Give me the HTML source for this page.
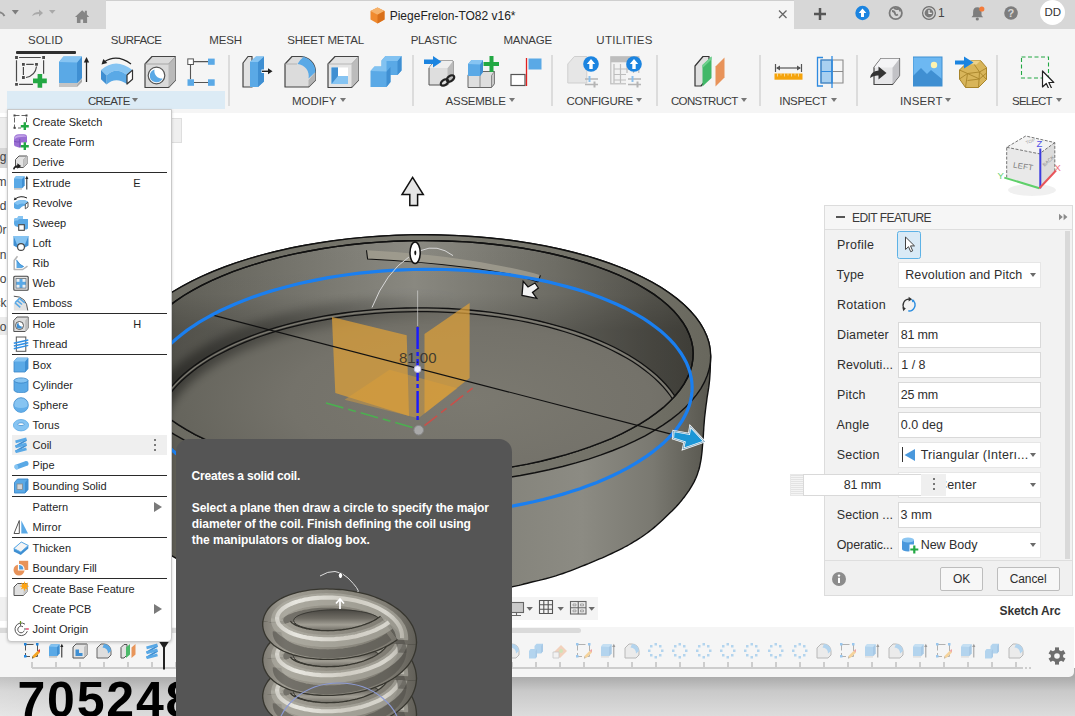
<!DOCTYPE html>
<html lang="en">
<head>
<meta charset="utf-8">
<title>PiegeFrelon-TO82 v16*</title>
<style>
html,body{margin:0;padding:0;}
body{width:1075px;height:716px;overflow:hidden;position:relative;background:#fff;font-family:"Liberation Sans",Arial,sans-serif;color:#333;}
.abs{position:absolute;}
.t{position:absolute;white-space:nowrap;line-height:1;}
#titlebar{left:0;top:0;width:1075px;height:29px;background:#d7d7d7;}
#doctab{left:106px;top:0;width:688px;height:29px;background:#f5f5f5;border-top:1px solid #cfcfcf;box-sizing:border-box;}
#toolbar{left:0;top:29px;width:1075px;height:84px;background:#f5f5f5;}
#canvas{left:0;top:113px;width:1075px;height:514px;background:#fff;}
#timeline{left:0;top:627px;width:1074px;height:50px;background:#f5f5f5;border-radius:0 0 5px 0;}
#below{left:0;top:668px;width:1075px;height:48px;background:linear-gradient(90deg,rgba(255,255,255,.28),rgba(255,255,255,0) 130px),linear-gradient(#ababab 0,#ababab 9px,#c9c9c9 23px,#dcdcdc 48px);}
.tab{font-size:11.5px;color:#3c3c3c;top:34.7px;}
.plabel{font-size:11.5px;color:#3c3c3c;top:95.7px;}
.sep{position:absolute;top:55px;width:2px;height:51px;background:#dcdcdc;}
.dd{position:absolute;width:0;height:0;border-left:3.5px solid transparent;border-right:3.5px solid transparent;border-top:4px solid #777;top:98px;}
.mi{font-size:11px;color:#1f1f1f;line-height:12px;}
.tp{font-size:12px;font-weight:bold;color:#fff;line-height:16px;}
.dl{font-size:12.5px;color:#2e2e2e;line-height:14px;}
.inp{position:absolute;left:898px;width:143px;height:26px;box-sizing:border-box;background:#fff;border:1px solid #d9d9d9;}
.dda{position:absolute;width:0;height:0;border-left:3.5px solid transparent;border-right:3.5px solid transparent;border-top:4px solid #6a6a6a;}
.btn{position:absolute;top:567px;height:24px;box-sizing:border-box;border:1px solid #bdbdbd;border-radius:2px;background:#f7f7f7;}
#tb0{left:28.1px !important;letter-spacing:0.02px}
#tb1{left:110.8px !important;letter-spacing:-0.52px}
#tb2{left:209.2px !important;letter-spacing:-0.11px}
#tb3{left:287.2px !important;letter-spacing:-0.18px}
#tb4{left:410.7px !important;letter-spacing:-0.26px}
#tb5{left:503.5px !important;letter-spacing:-0.23px}
#tb6{left:596.3px !important;letter-spacing:0.31px}
#pl0{left:87.9px !important;letter-spacing:-0.66px}
#pl1{left:292.0px !important;letter-spacing:-0.05px}
#pl2{left:445.5px !important;letter-spacing:-0.23px}
#pl3{left:566.5px !important;letter-spacing:-0.28px}
#pl4{left:670.9px !important;letter-spacing:-0.61px}
#pl5{left:779.3px !important;letter-spacing:-0.34px}
#pl6{left:900.0px !important;letter-spacing:0.11px}
#pl7{left:1012.1px !important;letter-spacing:-0.87px}
#ttl{left:389.7px !important;letter-spacing:-0.00px}
#tp0{left:191.6px !important;letter-spacing:-0.20px}
#tp1{left:191.8px !important;letter-spacing:-0.08px}
#tp2{left:191.8px !important;letter-spacing:-0.07px}
#tp3{left:191.8px !important;letter-spacing:-0.02px}
#dh{left:852.0px !important;letter-spacing:-0.55px}
#dv0{left:905.2px !important;letter-spacing:0.13px}
#dl0{left:837.0px !important;letter-spacing:0.26px}
#dl1{left:836.5px !important;letter-spacing:0.10px}
#dl2{left:837.0px !important;letter-spacing:0.29px}
#dl3{left:837.0px !important;letter-spacing:0.15px}
#dl4{left:837.0px !important;letter-spacing:0.03px}
#dl5{left:837.0px !important;letter-spacing:0.18px}
#dl6{left:836.5px !important;letter-spacing:0.18px}
#dl7{left:836.8px !important;letter-spacing:0.15px}
#dl8{left:836.8px !important;letter-spacing:0.05px}
#dl9{left:836.8px !important;letter-spacing:-0.16px}
#di0{left:900.8px !important;letter-spacing:-0.23px}
#di1{left:901.3px !important;letter-spacing:-0.03px}
#di2{left:900.8px !important;letter-spacing:-0.23px}
#di3{left:900.8px !important;letter-spacing:0.06px}
#di4{left:900.5px !important;letter-spacing:0.08px}
#dv1{left:920.7px !important;letter-spacing:0.26px}
#dv3{left:920.7px !important;letter-spacing:-0.03px}
#dv2{left:938.0px !important;letter-spacing:0.19px}
#df{left:843.8px !important;letter-spacing:-0.18px}
#db0{left:953.1px !important;letter-spacing:-0.14px}
#db1{left:1009.7px !important;letter-spacing:-0.09px}
#sa{left:999.5px !important;letter-spacing:-0.12px}
</style>
</head>
<body>
<div id="titlebar" class="abs"></div>
<div id="doctab" class="abs"></div>
<div id="toolbar" class="abs"></div>
<div id="canvas" class="abs"></div>
<div id="below" class="abs"></div>
<div id="timeline" class="abs"></div>
<svg class="abs" style="left:0;top:0" width="1075" height="716" viewBox="0 0 1075 716">
<defs>
<linearGradient id="gOuter" gradientUnits="userSpaceOnUse" x1="120" y1="0" x2="712" y2="0">
<stop offset="0" stop-color="#55544c"/><stop offset="0.35" stop-color="#74736a"/><stop offset="0.78" stop-color="#8c8b83"/><stop offset="0.9" stop-color="#7a7971"/><stop offset="1" stop-color="#56554d"/></linearGradient>
<linearGradient id="gRim" gradientUnits="userSpaceOnUse" x1="120" y1="0" x2="712" y2="0">
<stop offset="0" stop-color="#69685f"/><stop offset="0.5" stop-color="#79786e"/><stop offset="0.85" stop-color="#737268"/><stop offset="1" stop-color="#68675d"/></linearGradient>
<linearGradient id="gWall" gradientUnits="userSpaceOnUse" x1="135" y1="0" x2="694" y2="0">
<stop offset="0" stop-color="#5c5b53"/><stop offset="0.2" stop-color="#6e6d65"/><stop offset="0.5" stop-color="#8b8a82"/><stop offset="0.75" stop-color="#6f6e66"/><stop offset="0.92" stop-color="#55544d"/><stop offset="1" stop-color="#4b4a43"/></linearGradient>
<linearGradient id="gWallV" gradientUnits="userSpaceOnUse" x1="0" y1="240" x2="0" y2="330">
<stop offset="0" stop-color="#000" stop-opacity="0"/><stop offset="0.6" stop-color="#000" stop-opacity="0.02"/><stop offset="1" stop-color="#000" stop-opacity="0.17"/></linearGradient>
<radialGradient id="gFloor" gradientUnits="userSpaceOnUse" cx="470" cy="400" r="300" gradientTransform="translate(0 240) scale(1 0.4)">
<stop offset="0" stop-color="#7b7970"/><stop offset="0.6" stop-color="#74726a"/><stop offset="1" stop-color="#65645c"/></radialGradient>
<linearGradient id="gShade" gradientUnits="userSpaceOnUse" x1="170" y1="0" x2="460" y2="0"><stop offset="0" stop-color="#000" stop-opacity=".42"/><stop offset=".45" stop-color="#000" stop-opacity=".22"/><stop offset="1" stop-color="#000" stop-opacity="0"/></linearGradient>
<filter id="blur4" x="-10%" y="-30%" width="120%" height="160%"><feGaussianBlur stdDeviation="5"/></filter>
<clipPath id="cE2"><path d="M693.2 353.0 L692.9 359.2 L691.9 365.4 L690.1 371.6 L687.5 377.7 L684.1 383.8 L680.0 389.9 L675.2 395.8 L669.6 401.6 L663.3 407.4 L656.3 412.9 L648.7 418.4 L640.4 423.6 L631.4 428.7 L621.9 433.6 L611.8 438.3 L601.1 442.7 L589.9 446.9 L578.2 450.9 L566.1 454.6 L553.5 458.0 L540.6 461.2 L527.3 464.1 L513.6 466.6 L499.8 468.9 L485.6 470.9 L471.3 472.5 L456.8 473.9 L442.2 474.9 L427.5 475.6 L412.8 475.9 L398.1 476.0 L383.4 475.7 L368.8 475.1 L354.3 474.1 L340.0 472.8 L325.9 471.3 L312.1 469.3 L298.5 467.1 L285.3 464.6 L272.4 461.8 L259.9 458.7 L247.9 455.3 L236.3 451.7 L225.2 447.8 L214.6 443.6 L204.6 439.2 L195.2 434.6 L186.4 429.7 L178.2 424.7 L170.7 419.5 L163.8 414.1 L157.7 408.5 L152.3 402.9 L147.6 397.0 L143.6 391.1 L140.4 385.1 L138.0 379.0 L136.3 372.9 L135.4 366.7 L135.3 360.5 L135.9 354.3 L137.4 348.1 L139.6 341.9 L142.6 335.8 L146.3 329.7 L150.8 323.7 L156.0 317.8 L161.9 312.0 L168.5 306.4 L175.9 300.9 L183.8 295.5 L192.5 290.4 L201.7 285.4 L211.5 280.6 L221.9 276.1 L232.9 271.7 L244.3 267.6 L256.2 263.8 L268.6 260.2 L281.3 256.9 L294.5 253.9 L307.9 251.2 L321.7 248.7 L335.7 246.6 L350.0 244.8 L364.4 243.3 L378.9 242.1 L393.6 241.3 L408.3 240.8 L423.0 240.6 L437.7 240.7 L452.4 241.2 L466.9 241.9 L481.3 243.0 L495.5 244.5 L509.5 246.2 L523.2 248.3 L536.6 250.6 L549.6 253.3 L562.3 256.3 L574.6 259.5 L586.4 263.0 L597.7 266.8 L608.6 270.8 L618.9 275.1 L628.6 279.6 L637.7 284.4 L646.2 289.3 L654.1 294.4 L661.3 299.8 L667.8 305.2 L673.5 310.8 L678.6 316.6 L682.9 322.5 L686.5 328.4 L689.3 334.5 L691.4 340.6 L692.7 346.8 L693.2 353.0Z"/></clipPath>
</defs>
<path d="M120.8 364.1 L121.0 359.2 L121.6 354.2 L122.7 349.2 L124.2 344.3 L126.3 339.4 L128.7 334.5 L131.7 329.6 L135.0 324.8 L138.9 320.1 L143.1 315.4 L147.8 310.8 L152.9 306.2 L158.5 301.8 L164.4 297.4 L170.7 293.2 L177.4 289.0 L184.5 285.0 L192.0 281.1 L199.8 277.3 L208.0 273.6 L216.5 270.1 L225.3 266.7 L234.4 263.4 L243.8 260.3 L253.4 257.4 L263.4 254.6 L273.5 252.0 L283.9 249.6 L294.5 247.3 L305.3 245.3 L316.2 243.4 L327.4 241.6 L338.6 240.1 L350.0 238.8 L361.5 237.6 L373.0 236.7 L384.7 235.9 L396.4 235.3 L408.1 235.0 L419.8 234.8 L431.5 234.8 L443.2 235.1 L454.9 235.5 L466.5 236.1 L478.0 236.9 L489.4 237.9 L500.7 239.1 L511.9 240.5 L522.9 242.1 L533.7 243.9 L544.4 245.8 L554.8 248.0 L565.1 250.3 L575.1 252.7 L584.8 255.4 L594.3 258.2 L603.5 261.2 L612.4 264.3 L621.0 267.6 L629.2 271.0 L637.1 274.6 L644.7 278.3 L651.9 282.1 L658.8 286.1 L665.2 290.2 L671.3 294.4 L676.9 298.6 L682.2 303.0 L687.0 307.5 L691.4 312.1 L695.4 316.7 L698.9 321.4 L701.9 326.2 L704.5 331.0 L706.7 335.8 L708.4 340.7 L709.6 345.7 L710.7 357.0 L710.6 358.8 L710.5 361.2 L710.4 364.1 L710.3 367.2 L710.2 370.6 L710.0 373.9 L709.8 377.1 L709.6 380.0 L709.3 382.6 L709.0 385.2 L708.7 387.7 L708.3 390.2 L707.9 392.6 L707.5 395.1 L707.1 397.5 L706.8 400.0 L706.5 402.5 L706.1 405.0 L705.8 407.5 L705.5 410.0 L705.2 412.5 L704.9 415.0 L704.6 417.5 L704.4 420.0 L704.2 422.5 L704.0 424.9 L703.8 427.3 L703.7 429.8 L703.5 432.2 L703.4 434.6 L703.2 437.1 L703.0 439.5 L702.8 442.0 L702.6 444.5 L702.4 447.0 L702.2 449.5 L702.0 452.0 L701.7 454.5 L701.4 456.8 L701.1 459.1 L700.7 461.3 L700.3 463.3 L699.9 465.3 L699.5 467.3 L699.0 469.2 L698.4 471.0 L697.8 472.9 L697.2 474.7 L696.5 476.5 L695.8 478.2 L695.0 479.9 L694.2 481.6 L693.4 483.2 L692.4 484.9 L691.4 486.6 L690.3 488.4 L689.1 490.3 L687.8 492.2 L686.4 494.2 L684.9 496.2 L683.3 498.2 L681.8 500.2 L680.2 502.1 L678.6 504.0 L677.0 505.8 L675.4 507.6 L673.7 509.3 L672.0 511.0 L670.3 512.6 L668.5 514.3 L666.7 516.0 L664.9 517.7 L663.1 519.4 L661.2 521.2 L659.3 522.9 L657.3 524.7 L655.4 526.4 L653.4 528.1 L651.4 529.8 L649.3 531.4 L647.2 533.0 L645.1 534.5 L643.0 536.0 L640.8 537.5 L638.6 538.9 L636.3 540.3 L634.0 541.7 L631.7 543.1 L629.4 544.5 L627.0 545.8 L624.7 547.0 L622.3 548.3 L619.8 549.6 L617.2 550.9 L614.5 552.2 L611.7 553.5 L608.7 554.9 L605.6 556.3 L602.3 557.8 L598.9 559.2 L595.5 560.7 L592.0 562.1 L588.5 563.6 L585.0 565.0 L581.4 566.4 L577.8 567.9 L574.1 569.3 L570.3 570.8 L566.6 572.2 L562.9 573.5 L559.3 574.7 L555.8 575.9 L552.4 576.9 L548.9 577.9 L545.6 578.8 L542.2 579.6 L539.0 580.4 L535.9 581.1 L532.9 581.8 L530.0 582.5 L527.4 583.2 L525.1 583.8 L523.0 584.3 L520.9 584.9 L518.9 585.4 L516.6 585.9 L514.1 586.4 L511.2 587.0 L508.0 587.6 L504.5 588.2 L500.8 588.9 L496.9 589.5 L492.9 590.2 L488.7 590.8 L484.4 591.4 L480.0 592.0 L475.6 592.6 L471.1 593.1 L466.5 593.7 L461.8 594.2 L456.9 594.8 L451.6 595.2 L446.0 595.7 L440.0 596.0 L433.6 596.3 L426.9 596.6 L419.8 596.9 L412.5 597.2 L404.8 597.3 L396.9 597.4 L388.6 597.3 L380.0 597.0 L371.1 596.6 L361.9 596.1 L352.3 595.5 L342.5 594.8 L332.3 593.9 L321.9 592.9 L311.1 591.6 L300.0 590.0 L288.3 588.3 L275.7 586.6 L262.6 584.8 L249.4 582.7 L236.2 580.3 L223.4 577.4 L211.2 574.0 L200.0 570.0 L189.5 565.3 L179.2 560.1 L169.4 554.3 L160.0 548.1 L151.3 541.5 L143.3 534.6 L136.2 527.4 L130.0 520.0 L124.9 512.3 L120.8 504.3 L117.5 495.9 L114.9 487.2 L113.0 478.2 L111.6 469.0 L110.7 459.6 L110.0 450.0 L110.0 439.5 L110.8 427.8 L112.3 415.5 L114.2 403.1 L116.3 391.3 L118.3 380.6 L119.9 371.7 L121.0 365.0Z" fill="url(#gOuter)" stroke="#111" stroke-width="1.4" stroke-linejoin="round"/>
<path d="M710.7 355.6 L710.4 362.2 L709.3 368.8 L707.3 375.3 L704.5 381.9 L701.0 388.3 L696.6 394.7 L691.5 401.0 L685.5 407.2 L678.9 413.2 L671.5 419.1 L663.3 424.9 L654.5 430.4 L645.1 435.8 L635.0 440.9 L624.2 445.8 L612.9 450.5 L601.1 454.9 L588.7 459.1 L575.9 462.9 L562.6 466.5 L548.9 469.8 L534.8 472.8 L520.4 475.5 L505.7 477.8 L490.7 479.9 L475.6 481.6 L460.2 482.9 L444.8 483.9 L429.2 484.6 L413.7 484.9 L398.1 484.8 L382.6 484.5 L367.2 483.7 L351.9 482.7 L336.8 481.2 L321.9 479.5 L307.3 477.4 L292.9 475.0 L279.0 472.2 L265.4 469.2 L252.2 465.8 L239.5 462.2 L227.2 458.2 L215.5 454.0 L204.4 449.5 L193.8 444.8 L183.9 439.9 L174.6 434.7 L165.9 429.3 L158.0 423.7 L150.8 417.9 L144.3 412.0 L138.6 405.9 L133.7 399.7 L129.5 393.4 L126.2 387.0 L123.6 380.5 L121.9 374.0 L121.0 367.4 L120.9 360.8 L121.6 354.2 L123.1 347.6 L125.5 341.1 L128.7 334.6 L132.6 328.2 L137.4 321.8 L142.9 315.6 L149.2 309.5 L156.3 303.5 L164.0 297.7 L172.5 292.0 L181.6 286.6 L191.4 281.3 L201.8 276.3 L212.9 271.5 L224.4 267.0 L236.6 262.7 L249.2 258.7 L262.3 254.9 L275.8 251.5 L289.7 248.3 L303.9 245.5 L318.5 243.0 L333.3 240.8 L348.4 238.9 L363.6 237.4 L379.0 236.3 L394.5 235.4 L410.1 234.9 L425.6 234.8 L441.2 235.0 L456.6 235.6 L472.0 236.5 L487.2 237.7 L502.2 239.3 L517.0 241.2 L531.5 243.5 L545.6 246.1 L559.4 249.0 L572.8 252.2 L585.8 255.7 L598.2 259.5 L610.2 263.5 L621.7 267.9 L632.5 272.5 L642.8 277.3 L652.4 282.4 L661.4 287.7 L669.6 293.2 L677.2 298.9 L684.1 304.7 L690.1 310.7 L695.5 316.9 L700.0 323.1 L703.8 329.5 L706.7 335.9 L708.9 342.4 L710.2 349.0 L710.7 355.6Z" fill="url(#gRim)" stroke="#111" stroke-width="1.4"/>
<path d="M693.2 353.0 L692.9 359.2 L691.9 365.4 L690.1 371.6 L687.5 377.7 L684.1 383.8 L680.0 389.9 L675.2 395.8 L669.6 401.6 L663.3 407.4 L656.3 412.9 L648.7 418.4 L640.4 423.6 L631.4 428.7 L621.9 433.6 L611.8 438.3 L601.1 442.7 L589.9 446.9 L578.2 450.9 L566.1 454.6 L553.5 458.0 L540.6 461.2 L527.3 464.1 L513.6 466.6 L499.8 468.9 L485.6 470.9 L471.3 472.5 L456.8 473.9 L442.2 474.9 L427.5 475.6 L412.8 475.9 L398.1 476.0 L383.4 475.7 L368.8 475.1 L354.3 474.1 L340.0 472.8 L325.9 471.3 L312.1 469.3 L298.5 467.1 L285.3 464.6 L272.4 461.8 L259.9 458.7 L247.9 455.3 L236.3 451.7 L225.2 447.8 L214.6 443.6 L204.6 439.2 L195.2 434.6 L186.4 429.7 L178.2 424.7 L170.7 419.5 L163.8 414.1 L157.7 408.5 L152.3 402.9 L147.6 397.0 L143.6 391.1 L140.4 385.1 L138.0 379.0 L136.3 372.9 L135.4 366.7 L135.3 360.5 L135.9 354.3 L137.4 348.1 L139.6 341.9 L142.6 335.8 L146.3 329.7 L150.8 323.7 L156.0 317.8 L161.9 312.0 L168.5 306.4 L175.9 300.9 L183.8 295.5 L192.5 290.4 L201.7 285.4 L211.5 280.6 L221.9 276.1 L232.9 271.7 L244.3 267.6 L256.2 263.8 L268.6 260.2 L281.3 256.9 L294.5 253.9 L307.9 251.2 L321.7 248.7 L335.7 246.6 L350.0 244.8 L364.4 243.3 L378.9 242.1 L393.6 241.3 L408.3 240.8 L423.0 240.6 L437.7 240.7 L452.4 241.2 L466.9 241.9 L481.3 243.0 L495.5 244.5 L509.5 246.2 L523.2 248.3 L536.6 250.6 L549.6 253.3 L562.3 256.3 L574.6 259.5 L586.4 263.0 L597.7 266.8 L608.6 270.8 L618.9 275.1 L628.6 279.6 L637.7 284.4 L646.2 289.3 L654.1 294.4 L661.3 299.8 L667.8 305.2 L673.5 310.8 L678.6 316.6 L682.9 322.5 L686.5 328.4 L689.3 334.5 L691.4 340.6 L692.7 346.8 L693.2 353.0Z" fill="url(#gWall)" stroke="#111" stroke-width="1.4"/>
<g clip-path="url(#cE2)">
<path d="M693.2 353.0 L692.9 359.2 L691.9 365.4 L690.1 371.6 L687.5 377.7 L684.1 383.8 L680.0 389.9 L675.2 395.8 L669.6 401.6 L663.3 407.4 L656.3 412.9 L648.7 418.4 L640.4 423.6 L631.4 428.7 L621.9 433.6 L611.8 438.3 L601.1 442.7 L589.9 446.9 L578.2 450.9 L566.1 454.6 L553.5 458.0 L540.6 461.2 L527.3 464.1 L513.6 466.6 L499.8 468.9 L485.6 470.9 L471.3 472.5 L456.8 473.9 L442.2 474.9 L427.5 475.6 L412.8 475.9 L398.1 476.0 L383.4 475.7 L368.8 475.1 L354.3 474.1 L340.0 472.8 L325.9 471.3 L312.1 469.3 L298.5 467.1 L285.3 464.6 L272.4 461.8 L259.9 458.7 L247.9 455.3 L236.3 451.7 L225.2 447.8 L214.6 443.6 L204.6 439.2 L195.2 434.6 L186.4 429.7 L178.2 424.7 L170.7 419.5 L163.8 414.1 L157.7 408.5 L152.3 402.9 L147.6 397.0 L143.6 391.1 L140.4 385.1 L138.0 379.0 L136.3 372.9 L135.4 366.7 L135.3 360.5 L135.9 354.3 L137.4 348.1 L139.6 341.9 L142.6 335.8 L146.3 329.7 L150.8 323.7 L156.0 317.8 L161.9 312.0 L168.5 306.4 L175.9 300.9 L183.8 295.5 L192.5 290.4 L201.7 285.4 L211.5 280.6 L221.9 276.1 L232.9 271.7 L244.3 267.6 L256.2 263.8 L268.6 260.2 L281.3 256.9 L294.5 253.9 L307.9 251.2 L321.7 248.7 L335.7 246.6 L350.0 244.8 L364.4 243.3 L378.9 242.1 L393.6 241.3 L408.3 240.8 L423.0 240.6 L437.7 240.7 L452.4 241.2 L466.9 241.9 L481.3 243.0 L495.5 244.5 L509.5 246.2 L523.2 248.3 L536.6 250.6 L549.6 253.3 L562.3 256.3 L574.6 259.5 L586.4 263.0 L597.7 266.8 L608.6 270.8 L618.9 275.1 L628.6 279.6 L637.7 284.4 L646.2 289.3 L654.1 294.4 L661.3 299.8 L667.8 305.2 L673.5 310.8 L678.6 316.6 L682.9 322.5 L686.5 328.4 L689.3 334.5 L691.4 340.6 L692.7 346.8 L693.2 353.0Z" fill="url(#gWallV)"/>
<path d="M686.8 433.2 L686.6 438.1 L685.9 443.1 L684.9 448.0 L683.5 452.9 L681.6 457.8 L679.3 462.7 L676.6 467.5 L673.6 472.2 L670.1 476.9 L666.2 481.5 L662.0 486.1 L657.3 490.6 L652.3 494.9 L646.9 499.2 L641.2 503.4 L635.1 507.5 L628.7 511.4 L622.0 515.2 L615.0 518.9 L607.6 522.5 L599.9 525.9 L592.0 529.2 L583.8 532.4 L575.3 535.3 L566.6 538.2 L557.7 540.8 L548.6 543.3 L539.2 545.6 L529.7 547.8 L520.0 549.7 L510.1 551.5 L500.1 553.1 L489.9 554.5 L479.7 555.8 L469.4 556.8 L458.9 557.6 L448.5 558.3 L437.9 558.7 L427.4 559.0 L416.8 559.1 L406.2 558.9 L395.7 558.6 L385.2 558.1 L374.7 557.3 L364.4 556.4 L354.1 555.3 L343.9 554.0 L333.8 552.5 L323.8 550.9 L314.0 549.0 L304.4 547.0 L295.0 544.8 L285.7 542.4 L276.7 539.8 L267.8 537.1 L259.2 534.2 L250.9 531.2 L242.8 528.0 L235.0 524.6 L227.5 521.1 L220.3 517.5 L213.4 513.8 L206.8 509.9 L200.6 505.9 L194.7 501.8 L189.1 497.6 L183.9 493.2 L179.1 488.8 L174.6 484.3 L170.5 479.8 L166.9 475.1 L163.6 470.4 L160.7 465.6 L158.2 460.8 L156.1 455.9 L154.4 451.0 L153.2 446.1 L152.3 441.2 L151.9 436.2 L151.9 431.2 L152.3 426.3 L153.2 421.3 L154.4 416.4 L156.1 411.5 L158.1 406.6 L160.6 401.8 L163.5 397.0 L166.8 392.3 L170.4 387.6 L174.5 383.1 L179.0 378.5 L183.8 374.1 L189.0 369.8 L194.5 365.6 L200.4 361.4 L206.7 357.4 L213.2 353.5 L220.1 349.8 L227.3 346.1 L234.8 342.6 L242.6 339.3 L250.7 336.1 L259.0 333.0 L267.6 330.1 L276.4 327.4 L285.5 324.8 L294.7 322.4 L304.2 320.2 L313.8 318.1 L323.6 316.2 L333.5 314.5 L343.6 313.0 L353.8 311.7 L364.1 310.6 L374.5 309.6 L384.9 308.9 L395.4 308.3 L406.0 308.0 L416.5 307.8 L427.1 307.9 L437.7 308.1 L448.2 308.5 L458.7 309.2 L469.1 310.0 L479.4 311.0 L489.7 312.2 L499.8 313.6 L509.8 315.2 L519.7 316.9 L529.4 318.9 L539.0 321.0 L548.3 323.3 L557.5 325.8 L566.4 328.4 L575.1 331.2 L583.6 334.2 L591.8 337.3 L599.7 340.6 L607.4 344.0 L614.8 347.5 L621.8 351.2 L628.6 355.0 L635.0 359.0 L641.1 363.0 L646.8 367.2 L652.2 371.5 L657.2 375.8 L661.8 380.3 L666.1 384.8 L670.0 389.4 L673.5 394.1 L676.6 398.9 L679.3 403.7 L681.5 408.5 L683.4 413.4 L684.9 418.3 L685.9 423.2 L686.6 428.2 L686.8 433.2Z" fill="url(#gFloor)"/>
<path d="M156.0 455.5 L154.7 451.9 L153.7 448.2 L152.9 444.6 L152.3 440.9 L152.0 437.2 L151.9 433.5 L152.0 429.9 L152.3 426.2 L152.9 422.5 L153.7 418.8 L154.8 415.2 L156.0 411.5 L157.5 407.9 L159.3 404.3 L161.2 400.8 L163.4 397.2 L165.8 393.7 L168.4 390.2 L171.2 386.8 L174.2 383.4 L177.5 380.0 L180.9 376.7 L184.6 373.4 L188.4 370.2 L192.5 367.1 L196.7 364.0 L201.2 360.9 L205.8 358.0 L210.6 355.0 L215.6 352.2 L220.8 349.4 L226.1 346.7 L231.6 344.1 L237.3 341.5 L243.1 339.1 L249.1 336.7 L255.2 334.4 L261.5 332.2 L267.9 330.0 L274.4 328.0 L281.1 326.0 L287.9 324.1 L294.8 322.4 L301.7 320.7 L308.8 319.1 L316.0 317.6 L323.3 316.3 L330.7 315.0 L338.1 313.8 L345.6 312.7 L353.2 311.8 L360.8 310.9 L368.5 310.1 L376.2 309.5 L384.0 308.9 L391.8 308.5 L399.6 308.2 L407.4 308.0 L415.3 307.8 L423.1 307.8 L431.0 307.9 L438.8 308.1 L446.6 308.5 L454.4 308.9 L462.2 309.4 L469.9 310.0 L477.6 310.8 L485.2 311.6 L492.8 312.6 L500.3 313.6 L507.7 314.8 L515.1 316.1 L522.4 317.4 L529.6 318.9 L536.7 320.5 L543.7 322.1 L550.5 323.9 L557.3 325.7 L564.0 327.7 L570.5 329.7 L576.9 331.8 L583.2 334.0 L589.3 336.3 L595.3 338.7 L601.1 341.2 L606.8 343.7 L612.3 346.3 L617.7 349.0 L622.8 351.8 L627.8 354.6 L632.7 357.5 L637.3 360.5 L641.8 363.5 L646.0 366.6 L650.1 369.8 L653.9 373.0 L657.6 376.2 L661.1 379.5 L664.3 382.9 L667.4 386.3 L670.2 389.7 L672.8 393.2 L675.2 396.7 L677.4 400.2 L679.3 403.8 L681.0 407.4 L682.5 411.0 L683.8 414.6 L684.9 418.3 L685.7 421.9 L686.3 425.6 L686.6 429.3 L686.8 433.0 L686.7 436.7 L686.3 440.3 L685.8 444.0 L685.0 447.7 L684.0 451.3 L682.7 455.0" fill="none" stroke="url(#gShade)" stroke-width="22" filter="url(#blur4)"/>
<path d="M686.8 433.2 L686.6 438.1 L685.9 443.1 L684.9 448.0 L683.5 452.9 L681.6 457.8 L679.3 462.7 L676.6 467.5 L673.6 472.2 L670.1 476.9 L666.2 481.5 L662.0 486.1 L657.3 490.6 L652.3 494.9 L646.9 499.2 L641.2 503.4 L635.1 507.5 L628.7 511.4 L622.0 515.2 L615.0 518.9 L607.6 522.5 L599.9 525.9 L592.0 529.2 L583.8 532.4 L575.3 535.3 L566.6 538.2 L557.7 540.8 L548.6 543.3 L539.2 545.6 L529.7 547.8 L520.0 549.7 L510.1 551.5 L500.1 553.1 L489.9 554.5 L479.7 555.8 L469.4 556.8 L458.9 557.6 L448.5 558.3 L437.9 558.7 L427.4 559.0 L416.8 559.1 L406.2 558.9 L395.7 558.6 L385.2 558.1 L374.7 557.3 L364.4 556.4 L354.1 555.3 L343.9 554.0 L333.8 552.5 L323.8 550.9 L314.0 549.0 L304.4 547.0 L295.0 544.8 L285.7 542.4 L276.7 539.8 L267.8 537.1 L259.2 534.2 L250.9 531.2 L242.8 528.0 L235.0 524.6 L227.5 521.1 L220.3 517.5 L213.4 513.8 L206.8 509.9 L200.6 505.9 L194.7 501.8 L189.1 497.6 L183.9 493.2 L179.1 488.8 L174.6 484.3 L170.5 479.8 L166.9 475.1 L163.6 470.4 L160.7 465.6 L158.2 460.8 L156.1 455.9 L154.4 451.0 L153.2 446.1 L152.3 441.2 L151.9 436.2 L151.9 431.2 L152.3 426.3 L153.2 421.3 L154.4 416.4 L156.1 411.5 L158.1 406.6 L160.6 401.8 L163.5 397.0 L166.8 392.3 L170.4 387.6 L174.5 383.1 L179.0 378.5 L183.8 374.1 L189.0 369.8 L194.5 365.6 L200.4 361.4 L206.7 357.4 L213.2 353.5 L220.1 349.8 L227.3 346.1 L234.8 342.6 L242.6 339.3 L250.7 336.1 L259.0 333.0 L267.6 330.1 L276.4 327.4 L285.5 324.8 L294.7 322.4 L304.2 320.2 L313.8 318.1 L323.6 316.2 L333.5 314.5 L343.6 313.0 L353.8 311.7 L364.1 310.6 L374.5 309.6 L384.9 308.9 L395.4 308.3 L406.0 308.0 L416.5 307.8 L427.1 307.9 L437.7 308.1 L448.2 308.5 L458.7 309.2 L469.1 310.0 L479.4 311.0 L489.7 312.2 L499.8 313.6 L509.8 315.2 L519.7 316.9 L529.4 318.9 L539.0 321.0 L548.3 323.3 L557.5 325.8 L566.4 328.4 L575.1 331.2 L583.6 334.2 L591.8 337.3 L599.7 340.6 L607.4 344.0 L614.8 347.5 L621.8 351.2 L628.6 355.0 L635.0 359.0 L641.1 363.0 L646.8 367.2 L652.2 371.5 L657.2 375.8 L661.8 380.3 L666.1 384.8 L670.0 389.4 L673.5 394.1 L676.6 398.9 L679.3 403.7 L681.5 408.5 L683.4 413.4 L684.9 418.3 L685.9 423.2 L686.6 428.2 L686.8 433.2Z" fill="none" stroke="#111" stroke-width="1.3"/>
<path d="M685.3 433.7 L685.1 438.6 L684.5 443.5 L683.4 448.4 L682.0 453.3 L680.2 458.1 L677.9 462.9 L675.2 467.7 L672.2 472.4 L668.7 477.1 L664.8 481.6 L660.6 486.1 L656.0 490.6 L651.0 494.9 L645.7 499.1 L640.0 503.3 L634.0 507.3 L627.6 511.2 L620.9 515.0 L613.9 518.7 L606.6 522.2 L598.9 525.6 L591.1 528.9 L582.9 532.0 L574.5 534.9 L565.8 537.7 L556.9 540.3 L547.8 542.8 L538.5 545.1 L529.0 547.2 L519.4 549.2 L509.6 550.9 L499.6 552.5 L489.5 553.9 L479.3 555.1 L469.1 556.2 L458.7 557.0 L448.3 557.6 L437.8 558.1 L427.3 558.3 L416.8 558.4 L406.3 558.3 L395.8 557.9 L385.4 557.4 L375.0 556.7 L364.6 555.8 L354.4 554.7 L344.3 553.4 L334.2 551.9 L324.3 550.3 L314.6 548.4 L305.0 546.4 L295.6 544.2 L286.4 541.9 L277.4 539.3 L268.6 536.6 L260.1 533.8 L251.8 530.8 L243.8 527.6 L236.0 524.3 L228.5 520.9 L221.4 517.3 L214.5 513.5 L207.9 509.7 L201.7 505.7 L195.9 501.7 L190.3 497.5 L185.2 493.2 L180.4 488.9 L175.9 484.4 L171.9 479.9 L168.2 475.3 L164.9 470.6 L162.1 465.9 L159.6 461.1 L157.5 456.3 L155.9 451.4 L154.6 446.5 L153.8 441.6 L153.4 436.7 L153.3 431.8 L153.8 426.9 L154.6 422.0 L155.8 417.1 L157.5 412.3 L159.5 407.4 L162.0 402.7 L164.9 397.9 L168.1 393.3 L171.8 388.6 L175.8 384.1 L180.2 379.6 L185.0 375.3 L190.2 371.0 L195.7 366.8 L201.6 362.7 L207.8 358.7 L214.3 354.9 L221.2 351.2 L228.4 347.5 L235.8 344.1 L243.6 340.8 L251.6 337.6 L259.9 334.5 L268.4 331.7 L277.2 329.0 L286.2 326.4 L295.4 324.0 L304.8 321.8 L314.4 319.8 L324.1 317.9 L334.0 316.2 L344.0 314.7 L354.1 313.4 L364.4 312.3 L374.7 311.4 L385.1 310.7 L395.6 310.1 L406.0 309.8 L416.5 309.6 L427.1 309.6 L437.6 309.9 L448.0 310.3 L458.4 310.9 L468.8 311.7 L479.1 312.7 L489.3 313.9 L499.4 315.3 L509.3 316.9 L519.1 318.6 L528.8 320.5 L538.3 322.6 L547.6 324.9 L556.7 327.4 L565.6 330.0 L574.3 332.8 L582.7 335.7 L590.9 338.8 L598.7 342.0 L606.4 345.4 L613.7 348.9 L620.7 352.6 L627.4 356.4 L633.8 360.3 L639.8 364.3 L645.6 368.4 L650.9 372.6 L655.9 376.9 L660.5 381.4 L664.7 385.9 L668.6 390.4 L672.1 395.1 L675.2 399.8 L677.8 404.5 L680.1 409.3 L682.0 414.1 L683.4 419.0 L684.5 423.9 L685.1 428.8 L685.3 433.7Z" fill="none" stroke="#807e75" stroke-width="1.1"/>
<path d="M683.6 434.2 L683.4 439.1 L682.8 443.9 L681.8 448.8 L680.3 453.6 L678.5 458.4 L676.2 463.1 L673.6 467.8 L670.5 472.4 L667.1 477.0 L663.3 481.6 L659.1 486.0 L654.5 490.4 L649.5 494.7 L644.2 498.8 L638.6 502.9 L632.6 506.9 L626.3 510.8 L619.6 514.5 L612.6 518.1 L605.4 521.6 L597.8 525.0 L590.0 528.2 L581.8 531.3 L573.5 534.2 L564.9 537.0 L556.1 539.6 L547.0 542.0 L537.8 544.3 L528.3 546.4 L518.8 548.3 L509.0 550.0 L499.1 551.6 L489.1 553.0 L479.0 554.2 L468.7 555.2 L458.5 556.0 L448.1 556.6 L437.7 557.1 L427.3 557.3 L416.8 557.4 L406.4 557.3 L396.0 556.9 L385.6 556.4 L375.2 555.7 L365.0 554.8 L354.8 553.7 L344.7 552.5 L334.8 551.0 L324.9 549.4 L315.3 547.6 L305.8 545.6 L296.4 543.4 L287.3 541.1 L278.3 538.6 L269.6 535.9 L261.1 533.1 L252.9 530.1 L244.9 527.0 L237.2 523.7 L229.8 520.3 L222.6 516.8 L215.8 513.1 L209.3 509.3 L203.1 505.4 L197.3 501.4 L191.8 497.2 L186.7 493.0 L181.9 488.7 L177.5 484.3 L173.5 479.8 L169.8 475.3 L166.6 470.7 L163.7 466.0 L161.2 461.3 L159.2 456.5 L157.5 451.7 L156.3 446.9 L155.5 442.1 L155.1 437.2 L155.0 432.3 L155.5 427.5 L156.3 422.7 L157.5 417.8 L159.1 413.0 L161.2 408.3 L163.6 403.5 L166.5 398.9 L169.7 394.3 L173.4 389.7 L177.4 385.2 L181.8 380.8 L186.5 376.5 L191.7 372.2 L197.1 368.1 L203.0 364.1 L209.1 360.1 L215.6 356.3 L222.5 352.7 L229.6 349.1 L237.0 345.7 L244.7 342.4 L252.7 339.2 L260.9 336.2 L269.4 333.4 L278.1 330.7 L287.0 328.2 L296.2 325.8 L305.5 323.7 L315.0 321.7 L324.7 319.8 L334.5 318.2 L344.5 316.7 L354.6 315.4 L364.7 314.3 L375.0 313.4 L385.3 312.6 L395.7 312.1 L406.1 311.8 L416.6 311.6 L427.0 311.6 L437.4 311.9 L447.8 312.3 L458.2 312.9 L468.5 313.7 L478.7 314.7 L488.8 315.9 L498.9 317.2 L508.8 318.8 L518.5 320.5 L528.1 322.4 L537.5 324.5 L546.8 326.7 L555.8 329.2 L564.7 331.7 L573.3 334.5 L581.6 337.4 L589.8 340.4 L597.6 343.6 L605.2 347.0 L612.4 350.5 L619.4 354.1 L626.1 357.8 L632.4 361.6 L638.4 365.6 L644.1 369.7 L649.4 373.9 L654.4 378.1 L659.0 382.5 L663.2 386.9 L667.0 391.4 L670.5 396.0 L673.5 400.7 L676.2 405.4 L678.4 410.1 L680.3 414.9 L681.7 419.7 L682.8 424.5 L683.4 429.4 L683.6 434.2Z" fill="none" stroke="#111" stroke-width="1.2"/>
</g>
<path d="M693.2 353.0 L692.9 359.2 L691.9 365.4 L690.1 371.6 L687.5 377.7 L684.1 383.8 L680.0 389.9 L675.2 395.8 L669.6 401.6 L663.3 407.4 L656.3 412.9 L648.7 418.4 L640.4 423.6 L631.4 428.7 L621.9 433.6 L611.8 438.3 L601.1 442.7 L589.9 446.9 L578.2 450.9 L566.1 454.6 L553.5 458.0 L540.6 461.2 L527.3 464.1 L513.6 466.6 L499.8 468.9 L485.6 470.9 L471.3 472.5 L456.8 473.9 L442.2 474.9 L427.5 475.6 L412.8 475.9 L398.1 476.0 L383.4 475.7 L368.8 475.1 L354.3 474.1 L340.0 472.8 L325.9 471.3 L312.1 469.3 L298.5 467.1 L285.3 464.6 L272.4 461.8 L259.9 458.7 L247.9 455.3 L236.3 451.7 L225.2 447.8 L214.6 443.6 L204.6 439.2 L195.2 434.6 L186.4 429.7 L178.2 424.7 L170.7 419.5 L163.8 414.1 L157.7 408.5 L152.3 402.9 L147.6 397.0 L143.6 391.1 L140.4 385.1 L138.0 379.0 L136.3 372.9 L135.4 366.7 L135.3 360.5 L135.9 354.3 L137.4 348.1 L139.6 341.9 L142.6 335.8 L146.3 329.7 L150.8 323.7 L156.0 317.8 L161.9 312.0 L168.5 306.4 L175.9 300.9 L183.8 295.5 L192.5 290.4 L201.7 285.4 L211.5 280.6 L221.9 276.1 L232.9 271.7 L244.3 267.6 L256.2 263.8 L268.6 260.2 L281.3 256.9 L294.5 253.9 L307.9 251.2 L321.7 248.7 L335.7 246.6 L350.0 244.8 L364.4 243.3 L378.9 242.1 L393.6 241.3 L408.3 240.8 L423.0 240.6 L437.7 240.7 L452.4 241.2 L466.9 241.9 L481.3 243.0 L495.5 244.5 L509.5 246.2 L523.2 248.3 L536.6 250.6 L549.6 253.3 L562.3 256.3 L574.6 259.5 L586.4 263.0 L597.7 266.8 L608.6 270.8 L618.9 275.1 L628.6 279.6 L637.7 284.4 L646.2 289.3 L654.1 294.4 L661.3 299.8 L667.8 305.2 L673.5 310.8 L678.6 316.6 L682.9 322.5 L686.5 328.4 L689.3 334.5 L691.4 340.6 L692.7 346.8 L693.2 353.0Z" fill="none" stroke="#111" stroke-width="1.4"/>
<polygon points="389.5,369.8 457.4,388.3 418.3,418.2 344.6,399.8" fill="#dda038" fill-opacity="0.45"/>
<polygon points="331.9,316.9 406.7,335.3 409,415.9 335.3,392.9" fill="#dc9f38" fill-opacity="0.74"/>
<polygon points="424.5,334 469.6,303 469.6,378 424.5,413.6" fill="#dc9f38" fill-opacity="0.74"/>
<line x1="326" y1="403" x2="412.5" y2="427.4" stroke="#4caf50" stroke-width="1.6" stroke-dasharray="18 5 8 5"/>
<line x1="424.5" y1="425.6" x2="475.9" y2="385.5" stroke="#c8504a" stroke-width="1.6" stroke-dasharray="16 5 7 5"/>
<line x1="212.9" y1="315.1" x2="673" y2="434.6" stroke="#111" stroke-width="1.2"/>
<line x1="417.6" y1="290.5" x2="417.6" y2="326" stroke="#e0e0e0" stroke-width="1.1" stroke-opacity=".55"/>
<line x1="417.6" y1="327" x2="417.6" y2="423" stroke="#1a1aff" stroke-width="2.4" stroke-dasharray="22 3 4 3"/>
<path d="M366.500 250.300 Q420 252.500 470 260.500 T540.400 275.200 L538 282 Q500 272 468 267.500 T367.600 259z" fill="#a39f91" fill-opacity=".8"/>
<path d="M366.500 250.300L367.600 259 Q420 261.500 468 267.500 T538 282" fill="none" stroke="#111" stroke-width="1.100"/>
<path d="M540.400 275.200L538 282" stroke="#111" stroke-width="1.100"/>
<path d="M692.1 386.5 L692.0 391.4 L691.4 396.3 L690.5 401.1 L689.1 405.9 L687.3 410.8 L685.0 415.6 L682.4 420.3 L679.3 425.0 L675.9 429.7 L672.0 434.3 L667.7 438.8 L663.1 443.3 L658.0 447.6 L652.6 451.9 L646.8 456.1 L640.7 460.2 L634.2 464.2 L627.4 468.1 L620.2 471.9 L612.8 475.5 L605.0 479.0 L596.9 482.4 L588.6 485.6 L580.0 488.7 L571.2 491.6 L562.1 494.4 L552.7 497.0 L543.2 499.5 L533.5 501.8 L523.6 503.9 L513.5 505.9 L503.3 507.6 L493.0 509.2 L482.5 510.6 L471.9 511.8 L461.3 512.9 L450.6 513.7 L439.8 514.4 L429.0 514.8 L418.2 515.1 L407.4 515.2 L396.6 515.1 L385.8 514.8 L375.1 514.3 L364.4 513.6 L353.9 512.7 L343.4 511.7 L333.1 510.4 L322.9 509.0 L312.8 507.4 L302.9 505.6 L293.2 503.6 L283.7 501.4 L274.4 499.1 L265.3 496.6 L256.4 494.0 L247.8 491.2 L239.5 488.2 L231.4 485.1 L223.7 481.9 L216.2 478.5 L209.1 474.9 L202.3 471.3 L195.8 467.5 L189.7 463.6 L183.9 459.6 L178.5 455.5 L173.5 451.3 L168.8 446.9 L164.6 442.6 L160.7 438.1 L157.3 433.5 L154.2 428.9 L151.6 424.3 L149.3 419.6 L147.5 414.8 L146.2 410.0 L145.2 405.2 L144.7 400.3 L144.6 395.5 L144.9 390.6 L145.7 385.8 L146.8 380.9 L148.4 376.1 L150.5 371.3 L152.9 366.5 L155.8 361.8 L159.0 357.1 L162.7 352.5 L166.8 347.9 L171.2 343.4 L176.1 339.0 L181.3 334.7 L186.9 330.4 L192.9 326.3 L199.2 322.2 L205.8 318.3 L212.8 314.5 L220.1 310.8 L227.8 307.2 L235.7 303.7 L243.9 300.4 L252.3 297.3 L261.1 294.3 L270.0 291.4 L279.3 288.7 L288.7 286.2 L298.3 283.8 L308.1 281.6 L318.1 279.6 L328.2 277.7 L338.5 276.0 L348.9 274.5 L359.5 273.2 L370.1 272.1 L380.7 271.1 L391.5 270.4 L402.3 269.8 L413.1 269.5 L423.9 269.3 L434.7 269.3 L445.5 269.5 L456.2 269.9 L466.9 270.5 L477.5 271.3 L488.0 272.3 L498.4 273.4 L508.7 274.7 L518.9 276.3 L528.8 278.0 L538.7 279.9 L548.3 281.9 L557.7 284.2 L566.9 286.6 L575.9 289.1 L584.6 291.8 L593.1 294.7 L601.2 297.8 L609.1 301.0 L616.8 304.3 L624.1 307.7 L631.0 311.3 L637.7 315.1 L644.0 318.9 L649.9 322.9 L655.5 326.9 L660.7 331.1 L665.6 335.3 L670.0 339.7 L674.1 344.1 L677.7 348.6 L681.0 353.2 L683.8 357.9 L686.3 362.5 L688.3 367.3 L689.9 372.1 L691.0 376.9 L691.8 381.7 L692.1 386.5Z" fill="none" stroke="#1a7ff0" stroke-width="3.2"/>
<path d="M372 307.500 Q386 272 409 257" fill="none" stroke="#d8d8d8" stroke-width="1"/>
<path d="M421 250.500 Q437 243.500 453 255.600" fill="none" stroke="#d8d8d8" stroke-width="1"/>
<ellipse cx="415.100" cy="252.800" rx="5.100" ry="10.800" fill="#fff" stroke="#111" stroke-width="1.500"/><ellipse cx="415.300" cy="252.800" rx="1" ry="2.400" fill="#111"/>
<path d="M412.600 177.300L423.300 194.500H417.600V205.600H409.800V194.500H402L412.600 177.300z" fill="#e6e6e6" stroke="#111" stroke-width="1.500" stroke-linejoin="miter"/>
<path d="M522 295.500L523.200 281.300L528 287L535 283L538.400 288L532.500 292.500L536.700 298.400z" fill="#f2f2f2" stroke="#111" stroke-width="1.300" stroke-linejoin="miter"/>
<path d="M673.500 431L689 433.800L690.200 426.300L704.500 441.500L683 449L684.500 442.200L673 438.500z" fill="#1b96d6" stroke="#fff" stroke-width="2.200" stroke-linejoin="miter"/>
<path d="M673.500 431L689 433.800L690.200 426.300L704.500 441.500L683 449L684.500 442.200L673 438.500z" fill="none" stroke="#1b5f8a" stroke-width=".5" transform="translate(0 0)"/>
<text x="399" y="363.200" font-family="Liberation Sans, Arial, sans-serif" font-size="14" fill="#2a2a2a" fill-opacity=".85" textLength="37.500" lengthAdjust="spacingAndGlyphs">81.00</text>
<circle cx="417.600" cy="369.100" r="3.400" fill="#eef" stroke="#b8b8d8" stroke-width="1"/>
<circle cx="418.700" cy="430.200" r="4.800" fill="#a9a9a9" stroke="#888" stroke-width="1"/>
<ellipse cx="1032" cy="190" rx="24" ry="6" fill="#000" fill-opacity=".06"/>
<polygon points="1006.700,147.300 1025.700,136 1054.800,142.600 1039.400,153.800" fill="#f3f3f3"/>
<polygon points="1006.700,147.300 1039.400,153.800 1039.400,188.300 1006.700,177.600" fill="#e9e9e9"/>
<polygon points="1039.400,153.800 1054.800,142.600 1054.800,171 1039.400,188.300" fill="#dcdcdc"/>
<path d="M1006.700 177.600V147.300L1025.700 136L1054.800 142.600V171M1006.700 147.300L1039.400 153.800L1054.800 142.600" fill="none" stroke="#666" stroke-width=".9" stroke-dasharray="3 1.500"/>
<path d="M1040.300 188.300V148.500" stroke="#3b3be0" stroke-width="2"/>
<path d="M1039.400 188.300L1004.300 177.600" stroke="#5fd06a" stroke-width="2"/>
<path d="M1039.400 188.300L1056 170.500" stroke="#e8555a" stroke-width="2"/>
<text x="1036.500" y="146.500" font-family="Liberation Sans, Arial, sans-serif" font-size="9.500" fill="#5050e8">Z</text>
<text x="997.500" y="179" font-family="Liberation Sans, Arial, sans-serif" font-size="9.500" fill="#66d070">Y</text>
<text x="1054.500" y="171" font-family="Liberation Sans, Arial, sans-serif" font-size="9.500" fill="#f07078">X</text>
<text x="1013" y="169" font-family="Liberation Sans, Arial, sans-serif" font-size="8" fill="#7c7c7c" transform="rotate(9 1023 166)" letter-spacing=".2">LEFT</text>
<text x="1042" y="164" font-family="Liberation Sans, Arial, sans-serif" font-size="5" fill="#8a8a8a" transform="rotate(-42 1047 162)">BACK</text>
<text x="1026" y="143" font-family="Liberation Sans, Arial, sans-serif" font-size="4.500" fill="#999" transform="rotate(-20 1030 142)">TOP</text>
</svg>
<svg class="abs" style="left:0;top:0" width="106" height="29" viewBox="0 0 106 29">
<path d="M-3 14.500q4-4.500 7.500 1.500" fill="none" stroke="#858585" stroke-width="2"/>
<path d="M11.800 10h7l-3.500 4.500z" fill="#7d7d7d"/>
<path d="M32 16q1.500-4 7-4v-2.500l4 3.500-4 3.500v-2.500q-4 0-7 2z" fill="#a9a9a9"/>
<path d="M49 10h6.500l-3.250 3.800z" fill="#a9a9a9"/>
<path d="M75 17l7.200-6.700 2.600 2.400v-1.900h2.100v3.800l2.300 2.400h-2.100v6h-4v-3.600h-2.600v3.600h-3.600v-6z" fill="#858585"/>
</svg>
<svg class="abs" style="left:369px;top:7px" width="17" height="17" viewBox="0 0 17 17"><path d="M8.500 .5l7 3.500v8.500l-7 4-7-4v-8.500z" fill="#f08a2e"/><path d="M8.500 .5l7 3.500-7 3.700-7-3.700z" fill="#f6b26b"/><path d="M8.500 7.700l7-3.700v8.500l-7 4z" fill="#d9701a"/></svg>
<div class="t" id="ttl" style="left:390px;top:10.3px;font-size:12px;color:#222">PiegeFrelon-TO82 v16*</div>
<svg class="abs" style="left:776px;top:0px" width="299" height="29" viewBox="776 0 299 29">
<path d="M779 10.500l7.500 7.500M786.500 10.500l-7.500 7.500" stroke="#666" stroke-width="1.300"/>
<path d="M820 8v12M814 14h12" stroke="#565656" stroke-width="2.500"/>
<g transform="translate(0 -1)"><circle cx="862.500" cy="14" r="7.200" fill="#1b84e0"/><path d="M862.500 9.500l3.800 4.500h-2.300v4h-3v-4h-2.300z" fill="#fff"/>
<circle cx="895.700" cy="14" r="6.200" fill="none" stroke="#7a7a7a" stroke-width="1.800"/><path d="M892 12q2.500 0 3 2.500t3 1M894 8.500q1 2 3.500 1.500t2.500 2.500" fill="none" stroke="#7a7a7a" stroke-width="1.800"/>
<circle cx="929" cy="14" r="6.400" fill="none" stroke="#6f6f6f" stroke-width="1.200"/><circle cx="929" cy="14" r="4.400" fill="#7a7a7a"/><path d="M929 11v3.300h2.800" fill="none" stroke="#eee" stroke-width="1.200"/>
<path d="M977.300 8.200q4.200 0 4.200 5v3l1.600 2h-11.600l1.600-2v-3q0-5 4.200-5z" fill="#7d7d7d"/><circle cx="977.300" cy="20" r="1.600" fill="#7d7d7d"/><circle cx="981.800" cy="10" r="2.600" fill="#f47b3a"/>
<circle cx="1011" cy="14" r="6.800" fill="#7d7d7d"/></g>
</svg>
<div class="t" style="left:938px;top:7px;font-size:12px;color:#444">1</div>
<div class="t" style="left:1007.500px;top:7.500px;font-size:11px;font-weight:bold;color:#d8d8d8">?</div>
<div class="abs" style="left:1040px;top:.300px;width:25px;height:25px;border-radius:13px;background:#fff"></div>
<div class="t" id="ddx" style="left:1044.500px;top:7px;font-size:11.500px;color:#333">DD</div>
<div class="t tab" id="tb0" style="left:27.8px">SOLID</div>
<div class="t tab" id="tb1" style="left:110.5px">SURFACE</div>
<div class="t tab" id="tb2" style="left:208.9px">MESH</div>
<div class="t tab" id="tb3" style="left:286.9px">SHEET METAL</div>
<div class="t tab" id="tb4" style="left:410.4px">PLASTIC</div>
<div class="t tab" id="tb5" style="left:503.2px">MANAGE</div>
<div class="t tab" id="tb6" style="left:596.0px">UTILITIES</div>
<div class="abs" style="left:16px;top:51px;width:60px;height:3px;background:#2f2f2f;border-radius:1px"></div>
<div class="abs" style="left:7px;top:91px;width:217.5px;height:18px;background:#dcebf5"></div>
<div class="t plabel" id="pl0" style="left:87.6px">CREATE</div>
<div class="dd" style="left:132.4px"></div>
<div class="t plabel" id="pl1" style="left:291.7px">MODIFY</div>
<div class="dd" style="left:339.5px"></div>
<div class="t plabel" id="pl2" style="left:445.2px">ASSEMBLE</div>
<div class="dd" style="left:508.5px"></div>
<div class="t plabel" id="pl3" style="left:566.2px">CONFIGURE</div>
<div class="dd" style="left:635.5px"></div>
<div class="t plabel" id="pl4" style="left:670.6px">CONSTRUCT</div>
<div class="dd" style="left:740.5px"></div>
<div class="t plabel" id="pl5" style="left:779.0px">INSPECT</div>
<div class="dd" style="left:830.5px"></div>
<div class="t plabel" id="pl6" style="left:899.7px">INSERT</div>
<div class="dd" style="left:944.5px"></div>
<div class="t plabel" id="pl7" style="left:1011.8px">SELECT</div>
<div class="dd" style="left:1055.5px"></div>
<div class="sep" style="left:228.0px"></div>
<div class="sep" style="left:411.5px"></div>
<div class="sep" style="left:551.0px"></div>
<div class="sep" style="left:655.5px"></div>
<div class="sep" style="left:759.0px"></div>
<div class="sep" style="left:856.0px"></div>
<div class="sep" style="left:996.0px"></div>
<svg class="abs" style="left:15.0px;top:56px" width="32" height="32" viewBox="0 0 32 32"><path d="M4.100 1.500H25.800M1.500 4.300V25.600M28.600 4.300V17.700M4.100 28.400H17.900" fill="none" stroke="#4a4a4a" stroke-width="1.200"/><path d="M.100 .100h2.800v2.800h-2.800zM27.200 .100h2.800v2.800h-2.800zM.100 27h2.800v2.800h-2.800z" fill="#4a4a4a"/><path d="M11.200 8.300H18.700M8.400 11V18.900M21.500 10.500Q20.500 19.500 11 21.500" fill="none" stroke="#4a4a4a" stroke-width="1.200"/><path d="M7 6.900h2.800v2.800h-2.800zM20.100 6.900h2.800v2.800h-2.800zM7 20.100h2.800v2.800h-2.800z" fill="#4a4a4a"/><path d="M24.900 18v13.800M18 24.900h13.800" stroke="#22a843" stroke-width="4.600"/></svg>
<svg class="abs" style="left:58.2px;top:56px" width="32" height="32" viewBox="0 0 32 32"><path d="M1 27.500l6-4.500h17l-5 5.500v2.500h-18z" fill="#c4c4c4"/><path d="M19 28.500l5-5.500v3l-5 5z" fill="#a9a9a9"/><path d="M1 6l4.500-5.500h18.500v21.500l-5 5h-18z" fill="#5aa9e6"/><path d="M19 6.500l5-6v21.500l-5 5z" fill="#3f8fd2"/><path d="M1 6l4.500-5.500h18.500l-5 6z" fill="#86c4f2"/><path d="M28.500 26v-22" stroke="#222" stroke-width="1.300"/><path d="M25.800 6.500l2.700-5.500 2.700 5.500z" fill="#222"/></svg>
<svg class="abs" style="left:100.0px;top:56px" width="34" height="32" viewBox="0 0 34 32"><path d="M4.100 6Q16.800 -2.500 31 8" fill="none" stroke="#222" stroke-width="1.300"/><path d="M1.500 8.600L3.300 3L7.300 7z" fill="#222"/><path d="M1 14.100Q15.600 1 32.500 14.100L27 19Q15.600 10 6.500 19.600z" fill="#86c4f2"/><path d="M6.500 19.600Q15.600 10 27 19V28Q15.600 20 6.500 28.600z" fill="#5aa9e6"/><path d="M1 14.100L6.500 19.600V28.600L1 23.200z" fill="#3f8fd2"/><path d="M27 19L32.500 14.100V23.200L27 28z" fill="#fff" stroke="#333" stroke-width="1.200" stroke-linejoin="round"/></svg>
<svg class="abs" style="left:144.0px;top:56px" width="32" height="32" viewBox="0 0 32 32"><path d="M1 8l7-7.500h23.500v23.500l-7 7.500h-23.500z" fill="#dadada" stroke="#444" stroke-width="1.200" stroke-linejoin="round"/><path d="M24.500 8v23.500l7-7.500v-23.500z" fill="#b9b9b9"/><path d="M1 8h23.500l7-7.500" fill="none" stroke="#999" stroke-width=".8"/><circle cx="12.500" cy="19.500" r="8.300" fill="#fff" stroke="#555" stroke-width="1.200"/><path d="M5.800 19.500a6.700 6.700 0 0 0 12.700 3a7.500 7.500 0 0 1-8-9a6.700 6.700 0 0 0-4.700 6z" fill="#5aa9e6"/></svg>
<svg class="abs" style="left:187.0px;top:56px" width="30" height="32" viewBox="0 0 30 32"><path d="M6.600 5.600H21M3.500 8.700V23.200M6.600 26.500H21" fill="none" stroke="#555" stroke-width="1.100"/><rect x=".800" y="2.900" width="5.600" height="5.600" fill="#fff" stroke="#555" stroke-width="1"/><rect x="21" y="2.600" width="6.700" height="6.200" fill="#5aa9e6"/><rect x=".500" y="23.300" width="6.500" height="6.500" fill="#5aa9e6"/><rect x="21" y="23.300" width="6.700" height="6.500" fill="#5aa9e6"/></svg>
<svg class="abs" style="left:241.5px;top:56px" width="31" height="32" viewBox="0 0 31 32"><path d="M1 31v-24l5-6.500h4v30.500z" fill="#e2e2e2" stroke="#444" stroke-width="1.200" stroke-linejoin="round"/><path d="M8 6l6-5.500h8v25l-6 5.500h-8z" fill="#5aa9e6"/><path d="M16 6l6-5.500v25l-6 5.500z" fill="#3f8fd2"/><path d="M8 6l6-5.500h8l-6 5.500z" fill="#86c4f2"/><rect x="19.500" y="13.500" width="5" height="3.500" fill="#fff"/><path d="M20 15.300h8" stroke="#222" stroke-width="1.400"/><path d="M26 12.300l4.500 3-4.500 3z" fill="#222"/></svg>
<svg class="abs" style="left:284.0px;top:56px" width="32" height="32" viewBox="0 0 32 32"><path d="M1 31v-23l7-7.500h8a15.500 15.500 0 0 1 15.500 15.500v8l-7 7z" fill="#dcdcdc" stroke="#444" stroke-width="1.200" stroke-linejoin="round"/><path d="M24.500 24v7l7-7v-8z" fill="#b4b4b4"/><path d="M13 .5h3a15.500 15.500 0 0 1 15.500 15.500l-7 6.500a12 12 0 0 0-11-14.500q2-4 6.500-7.500z" fill="#5aa9e6"/><path d="M1 8h12" stroke="#aaa" stroke-width=".8"/></svg>
<svg class="abs" style="left:327.0px;top:56px" width="32" height="32" viewBox="0 0 32 32"><path d="M1 8l7-7.500h23.500v23.500l-7 7.500h-23.500z" fill="#e4e4e4" stroke="#444" stroke-width="1.200" stroke-linejoin="round"/><path d="M24.500 8v23.500l7-7.500v-23.500z" fill="#bcbcbc"/><path d="M1 8h23.500l7-7.500" fill="none" stroke="#aaa" stroke-width=".8"/><rect x="4.500" y="11.500" width="16.500" height="16.500" fill="#fff"/><path d="M4.500 11.500h6.500v8.500h10v8h-16.500z" fill="#86c4f2"/><path d="M4.500 11.500h6.500v8.500l-6.500 8z" fill="#3f8fd2"/></svg>
<svg class="abs" style="left:370.0px;top:56px" width="32" height="32" viewBox="0 0 32 32"><path d="M.5 15l4-4.500h7v-6l4-4.500h16v14.500l-4 4.500h-7v7l-4 5h-16z" fill="#5aa9e6"/><path d="M16.500 15.500l4-4.500v15l-4 5zM27.500 5l4-5v14.500l-4 4.500z" fill="#3f8fd2"/><path d="M.5 15l4-4.500h7v-6l4-4.500h16l-4 5h-11v10.500z" fill="#86c4f2" opacity=".9"/></svg>
<svg class="abs" style="left:424.0px;top:56px" width="32" height="32" viewBox="0 0 32 32"><path d="M5 12l5.500-7h18.500v17l-5.500 7h-18.500z" fill="#dedede" stroke="#555" stroke-width="1" stroke-linejoin="round"/><path d="M23.500 12v17l5.500-7v-17z" fill="#bbb"/><path d="M5 12h18.500l5.500-7h-18.500z" fill="#eee"/><path d="M0 3.500h9v-3.500l8.500 5.800-8.500 5.800v-3.600h-9z" fill="#1b84e0"/><g fill="none" stroke="#222" stroke-width="2.200"><ellipse cx="20.500" cy="26.500" rx="4.200" ry="2.600" transform="rotate(-35 20.500 26.500)"/><ellipse cx="26.500" cy="22.500" rx="4.200" ry="2.600" transform="rotate(-35 26.500 22.500)"/></g></svg>
<svg class="abs" style="left:467.0px;top:56px" width="32" height="32" viewBox="0 0 32 32"><path d="M1 19l3-3.500h23.500v12l-3 4h-23.500z" fill="#dedede" stroke="#666" stroke-width="1" stroke-linejoin="round"/><path d="M13 16v15.500M24.500 19.500v12l3-4v-12z" fill="#c6c6c6" stroke="#777" stroke-width=".8"/><path d="M1 8l3.500-4h11.500v12l-3 4h-12z" fill="#5aa9e6"/><path d="M13 8.500l3-4.500v12l-3 4z" fill="#3f8fd2"/><path d="M1 8l3.500-4h11.500l-3 4.500z" fill="#86c4f2"/><path d="M24.500 0v16M16.500 8h16" stroke="#22a843" stroke-width="4"/></svg>
<svg class="abs" style="left:509.5px;top:56px" width="32" height="32" viewBox="0 0 32 32"><rect x="1" y="18.500" width="14" height="11" fill="#fff" stroke="#555" stroke-width="1.200"/><path d="M16.500 2v28" stroke="#e02020" stroke-width="1.300"/><rect x="18.500" y="2.500" width="13" height="11" fill="#5aa9e6"/></svg>
<svg class="abs" style="left:567.0px;top:56px" width="32" height="32" viewBox="0 0 32 32"><path d="M.8 27v-19l6.500-7.500h12.500v26.500z" fill="#e6e6e6" stroke="#cfcfcf" stroke-width="1"/><circle cx="24" cy="8" r="7.800" fill="#1b84e0"/><path d="M24 3l4.200 5h-2.500v5h-3.400v-5h-2.500z" fill="#fff"/><path d="M18 23h13M18 28.500h13" stroke="#b5b5b5" stroke-width="1.500"/><path d="M22.500 20v6" stroke="#8cc0ec" stroke-width="2"/><path d="M27.500 25.500v6" stroke="#b5b5b5" stroke-width="2"/></svg>
<svg class="abs" style="left:610.0px;top:56px" width="32" height="32" viewBox="0 0 32 32"><rect x=".8" y=".8" width="28" height="27" fill="#f2f2f2" stroke="#bdbdbd" stroke-width="1.200"/><rect x=".8" y=".8" width="28" height="5.500" fill="#bdbdbd"/><path d="M4 13h25M4 18.500h25M4 24h25M4 8v19M10.500 8v19M17 8v19M23.500 8v19" stroke="#bdbdbd" stroke-width="1.200"/><rect x="16" y="17" width="15" height="15" fill="#f5f5f5"/><circle cx="24" cy="8" r="7.800" fill="#1b84e0"/><path d="M24 3l4.200 5h-2.500v5h-3.400v-5h-2.500z" fill="#fff"/><path d="M18 23h13M18 28.500h13" stroke="#b5b5b5" stroke-width="1.500"/><path d="M22.500 20v6" stroke="#8cc0ec" stroke-width="2"/><path d="M27.500 25.500v6" stroke="#b5b5b5" stroke-width="2"/></svg>
<svg class="abs" style="left:694.0px;top:56px" width="31" height="32" viewBox="0 0 31 32"><path d="M1 30v-20l8-9.500h6v20l-8 9.500z" fill="#e0e0e0" stroke="#333" stroke-width="1.200" stroke-linejoin="round"/><path d="M8.500 9l9-8.500v21.500l-9 8.500z" fill="#41b868"/><path d="M8.500 9l9-8.500v3l-9 8.500z" fill="#6fd08e"/><path d="M21.500 10.500l9-9v20l-9 9z" fill="#e8935a"/></svg>
<svg class="abs" style="left:773.0px;top:56px" width="31" height="32" viewBox="0 0 31 32"><path d="M2.500 8v8M28.500 8v8" stroke="#555" stroke-width="1.200"/><path d="M4 12h23" stroke="#555" stroke-width="1.200"/><path d="M3 12l4-2.500v5zM28 12l-4-2.500v5z" fill="#555"/><rect x="1.500" y="17.500" width="28" height="6.200" fill="#f5a40c"/><path d="M4.500 17.500v3M8 17.500v2M11.500 17.500v3M15 17.500v2M18.500 17.500v3M22 17.500v2M25.500 17.500v3" stroke="#fff" stroke-width=".8" opacity=".7"/></svg>
<svg class="abs" style="left:816.0px;top:56px" width="30" height="32" viewBox="0 0 30 32"><rect x="5" y="4" width="11" height="23" fill="#a8d0f0"/><path d="M5 4h22v23h-22zM5 15.500h22M16 4v23" fill="none" stroke="#8a8a8a" stroke-width="1.100"/><path d="M5 4h11v23h-11zM5 15.500h11" fill="none" stroke="#2e8ae0" stroke-width="1.200"/><path d="M7 1.500h-5.500v28.500h5.500M16 0v32" fill="none" stroke="#2e8ae0" stroke-width="1.300"/></svg>
<svg class="abs" style="left:869.0px;top:56px" width="32" height="32" viewBox="0 0 32 32"><path d="M5 11.500l7-9h18.500v17l-7 9h-18.500z" fill="#e6e6e8" stroke="#444" stroke-width="1.200" stroke-linejoin="round"/><path d="M23.500 11.500v17l7-9v-17z" fill="#c2c2c6"/><path d="M5 11.500h18.500l7-9h-18.500z" fill="#f4f4f6"/><path d="M1 22q1-7 8.500-7.500v-4l8 6.500-8 6.500v-4q-5-.5-8.500 2.500z" fill="#333"/></svg>
<svg class="abs" style="left:913.0px;top:56px" width="30" height="32" viewBox="0 0 30 32"><rect x="0" y="1" width="29" height="29" fill="#6db8f2"/><path d="M0 20l8-8 6 6 4-4 11 9v7h-29z" fill="#3f8fd2"/><circle cx="21" cy="9" r="3.200" fill="#fdf3b0"/><rect x="0" y="1" width="29" height="29" fill="none" stroke="#3f8fd2" stroke-width="1"/></svg>
<svg class="abs" style="left:955.0px;top:56px" width="32" height="32" viewBox="0 0 32 32"><path d="M4.500 14v9l6 8.500h13l8-8v-12l-6-7h-9l-6.500 4z" fill="#d8b55a" stroke="#a8842a" stroke-width="1"/><path d="M4.500 14l8 3.500 12-1.500 7-4M12.500 17.500l-2 14M24.500 16l-1 15.500M4.500 23l8-5.500M12.500 24.500l12-1.500 7-6M24.500 16l7 7.500M16.500 4.500l8 11.500M12.500 17.500l12 5.500" fill="none" stroke="#a8842a" stroke-width=".9"/><path d="M10 8l6.500-3.500 9 0 -4 4z" fill="#ecd28a"/><path d="M0 4.500h9v-4l9.500 6-9.500 6v-4h-9z" fill="#1b84e0"/></svg>
<svg class="abs" style="left:1020.0px;top:56px" width="36" height="32" viewBox="0 0 36 32"><rect x="1.500" y="1" width="27" height="21" fill="none" stroke="#22a843" stroke-width="1.100" stroke-dasharray="4 2.500"/><path d="M22.500 15v16l3.800-3.500 2.800 6 2.500-1.200-2.800-5.800h5z" fill="#fff" stroke="#222" stroke-width="1.200" stroke-linejoin="round"/></svg>
<div class="abs" style="left:0;top:117px;width:8px;height:31px;background:#ededed;border-top:1px solid #e0e0e0;box-sizing:border-box"></div>
<div class="abs" style="left:0;top:148px;width:8px;height:20px;background:#d6d6d6"></div>
<div class="abs" style="left:171px;top:118px;width:11px;height:25px;background:#efefef;border:1px solid #dedede;border-left:none;box-sizing:border-box"></div>
<div class="abs" style="left:0;top:317px;width:8px;height:18px;background:#ebebeb"></div>
<div class="abs" style="left:0;top:113px;width:7px;height:484px;overflow:hidden">
<div class="t" style="right:0.500px;top:38px;font-size:12px;color:#444">g</div>
<div class="t" style="right:0.500px;top:63px;font-size:12px;color:#444">m</div>
<div class="t" style="right:0.500px;top:87px;font-size:12px;color:#444">ed</div>
<div class="t" style="right:0.500px;top:111px;font-size:12px;color:#444">0r</div>
<div class="t" style="right:0.500px;top:136px;font-size:12px;color:#444">An</div>
<div class="t" style="right:0.500px;top:160px;font-size:12px;color:#444">Bo</div>
<div class="t" style="right:0.500px;top:184px;font-size:12px;color:#444">ck</div>
<div class="t" style="right:0.500px;top:208px;font-size:12px;color:#444">to</div>
</div>
<div class="abs" style="left:0;top:597px;width:8px;height:24px;background:#f0f0f0"></div>
<div class="abs" style="left:500px;top:597px;width:98px;height:23px;background:#f4f4f4"></div>
<svg class="abs" style="left:500px;top:597px" width="98" height="23" viewBox="500 597 98 23">
<rect x="509" y="602.500" width="14.500" height="10" fill="#c9c9c9" stroke="#666" stroke-width="1.100"/><path d="M512 615.500h9M516.500 612v3.500" stroke="#666" stroke-width="1.100"/>
<path d="M526.500 607h6.400l-3.200 3.800z" fill="#6a6a6a"/>
<path d="M539.500 600.500h13v13h-13zM543.800 600.500v13M548.200 600.500v13M539.500 604.800h13M539.500 609.200h13" fill="none" stroke="#555" stroke-width="1.100"/>
<path d="M557.500 607h6.400l-3.200 3.800z" fill="#6a6a6a"/>
<rect x="570.500" y="601.500" width="15.500" height="12.500" fill="#e9e9e9" stroke="#666" stroke-width="1.100"/><path d="M578.250 601.500v12.500M570.500 607.750h15.500" stroke="#666" stroke-width="1.100"/><path d="M573 604h3v1.800h-3zM580.500 604h3v1.800h-3zM573 610h3v1.800h-3zM580.500 610h3v1.800h-3z" fill="none" stroke="#888" stroke-width=".7"/>
<path d="M588.500 607h6.400l-3.200 3.800z" fill="#6a6a6a"/>
</svg>
<div class="abs" style="left:-4px;top:628px;width:585px;height:5px;border-radius:3px;background:#dadada"></div>
<div class="abs" style="left:32px;top:667px;width:991px;height:2px;background:#cdcdcd"></div>
<div class="abs" style="left:1025px;top:667px;width:2px;height:2px;background:#cdcdcd"></div><div class="abs" style="left:1029px;top:667px;width:2px;height:2px;background:#cdcdcd"></div>
<svg class="abs" style="left:24px;top:643px" width="16" height="16" viewBox="0 0 16 16"><rect x="1.500" y="1.500" width="12" height="12" fill="none" stroke="#555" stroke-width="1" stroke-dasharray="8 2.500"/><rect x="0" y="0" width="2.500" height="2.500" fill="#1e88e5"/><rect x="12" y="0" width="2.500" height="2.500" fill="#1e88e5"/><rect x="0" y="12" width="2.500" height="2.500" fill="#1e88e5"/><path d="M8 15.500l1-3 5-5 2 2-5 5z" fill="#f5a623"/><path d="M14 7.500l1-1q1-.5 1.500.5t-.5 1.500l-1 1z" fill="#e53935"/><path d="M8 15.500l.5-1.700 1.200 1.200z" fill="#444"/></svg>
<svg class="abs" style="left:48px;top:643px" width="16" height="16" viewBox="0 0 16 16"><path d="M1 13l2.500-1.500h8l-2.500 2v1.300h-8z" fill="#c9c9c9"/><path d="M1 3.500l2-2.300h8.500v9.300l-2.500 2.500h-8z" fill="#5aa9e6"/><path d="M9 4l2.500-2.800v9.300l-2.500 2.500z" fill="#3f8fd2"/><path d="M1 3.500l2-2.300h8.500l-2.500 2.800z" fill="#86c4f2"/><path d="M13.800 14.500v-12" stroke="#222" stroke-width="1"/><path d="M12.200 4l1.600-3.300 1.600 3.300z" fill="#222"/></svg>
<svg class="abs" style="left:72px;top:643px" width="16" height="16" viewBox="0 0 16 16"><path d="M1 4l3-3h11v11l-3 3h-11z" fill="#e4e4e4" stroke="#555" stroke-width="1" stroke-linejoin="round"/><path d="M12 4v11l3-3v-11z" fill="#c0c0c0"/><path d="M3.500 6.500h3.500v3.500h3.500v3h-7z" fill="#3f8fd2"/></svg>
<svg class="abs" style="left:96px;top:643px" width="16" height="16" viewBox="0 0 16 16"><path d="M1 15v-10l4-4h3a7 7 0 0 1 7 7v4l-3 3z" fill="#dedede" stroke="#666" stroke-width="1" stroke-linejoin="round"/><path d="M8 1a7 7 0 0 1 7 7l-3 2.500a5.500 5.500 0 0 0-5.500-6z" fill="#5aa9e6"/></svg>
<svg class="abs" style="left:120px;top:643px" width="16" height="16" viewBox="0 0 16 16"><path d="M1 4.500l3-3h3v10.500l-3 3h-3z" fill="#e2e2e2" stroke="#555" stroke-width="1" stroke-linejoin="round"/><path d="M6 4.500l4-3.500v10.500l-4 3.500z" fill="#4cba6a"/><path d="M11.500 4.500l4-3.500v10.500l-4 3.500z" fill="#e8955a"/></svg>
<svg class="abs" style="left:144px;top:643px" width="16" height="16" viewBox="0 0 16 16"><path d="M13.500 3L2.500 9.500M13.500 8L2.500 14.500" fill="none" stroke="#3f8fd2" stroke-width="2"/><path d="M2.500 4.800L13.500 1.800M2.500 9.800L13.500 6.800M2.500 14.800L13.500 11.800" fill="none" stroke="#5aa9e6" stroke-width="2.800"/></svg>
<svg class="abs" style="left:504px;top:643px;opacity:.42" width="16" height="16" viewBox="0 0 16 16"><path d="M1 15v-10l4-4h3a7 7 0 0 1 7 7v4l-3 3z" fill="#dedede" stroke="#666" stroke-width="1" stroke-linejoin="round"/><path d="M8 1a7 7 0 0 1 7 7l-3 2.500a5.500 5.500 0 0 0-5.500-6z" fill="#5aa9e6"/></svg>
<svg class="abs" style="left:528px;top:643px;opacity:.42" width="16" height="16" viewBox="0 0 16 16"><path d="M1 8l1.500-2h4v-3l2-2.300h6.500v7.500l-2 2.300h-4v3l-1.500 2h-6.500z" fill="#5aa9e6"/><path d="M7.500 8l1.500-2v7.500l-1.500 2zM13 3l2-2.300v7.500l-2 2.300z" fill="#3f8fd2"/></svg>
<svg class="abs" style="left:552px;top:643px;opacity:.42" width="16" height="16" viewBox="0 0 16 16"><path d="M2 9l7-7 6 6-7 7z" fill="#f0a070"/><path d="M1 9h6v6h-6z" fill="#eee" stroke="#888" stroke-width=".8"/><circle cx="9" cy="8" r="2" fill="#9ccc65"/></svg>
<svg class="abs" style="left:576px;top:643px;opacity:.42" width="16" height="16" viewBox="0 0 16 16"><rect x="1.500" y="1.500" width="12" height="12" fill="none" stroke="#555" stroke-width="1" stroke-dasharray="8 2.500"/><rect x="0" y="0" width="2.500" height="2.500" fill="#1e88e5"/><rect x="12" y="0" width="2.500" height="2.500" fill="#1e88e5"/><rect x="0" y="12" width="2.500" height="2.500" fill="#1e88e5"/><path d="M8 15.500l1-3 5-5 2 2-5 5z" fill="#f5a623"/><path d="M14 7.500l1-1q1-.5 1.500.5t-.5 1.500l-1 1z" fill="#e53935"/><path d="M8 15.500l.5-1.700 1.200 1.200z" fill="#444"/></svg>
<svg class="abs" style="left:600px;top:643px;opacity:.42" width="16" height="16" viewBox="0 0 16 16"><path d="M1 13l2.500-1.500h8l-2.500 2v1.300h-8z" fill="#c9c9c9"/><path d="M1 3.500l2-2.300h8.500v9.300l-2.500 2.500h-8z" fill="#5aa9e6"/><path d="M9 4l2.500-2.800v9.300l-2.500 2.500z" fill="#3f8fd2"/><path d="M1 3.500l2-2.300h8.500l-2.500 2.800z" fill="#86c4f2"/><path d="M13.800 14.500v-12" stroke="#222" stroke-width="1"/><path d="M12.200 4l1.600-3.300 1.600 3.300z" fill="#222"/></svg>
<svg class="abs" style="left:624px;top:643px;opacity:.42" width="16" height="16" viewBox="0 0 16 16"><path d="M1 15v-10l4-4h3a7 7 0 0 1 7 7v4l-3 3z" fill="#dedede" stroke="#666" stroke-width="1" stroke-linejoin="round"/><path d="M8 1a7 7 0 0 1 7 7l-3 2.500a5.500 5.500 0 0 0-5.500-6z" fill="#5aa9e6"/></svg>
<svg class="abs" style="left:648px;top:643px;opacity:.42" width="16" height="16" viewBox="0 0 16 16"><g fill="#5aa9e6"><rect x="6.500" y="0" width="2.500" height="2.500"/><rect x="11" y="2" width="2.500" height="2.500"/><rect x="13" y="6.500" width="2.500" height="2.500"/><rect x="11" y="11" width="2.500" height="2.500"/><rect x="6.500" y="13" width="2.500" height="2.500"/><rect x="2" y="11" width="2.500" height="2.500"/><rect x="0" y="6.500" width="2.500" height="2.500"/><rect x="2" y="2" width="2.500" height="2.500"/></g></svg>
<svg class="abs" style="left:672px;top:643px;opacity:.42" width="16" height="16" viewBox="0 0 16 16"><g fill="#5aa9e6"><rect x="6.500" y="0" width="2.500" height="2.500"/><rect x="11" y="2" width="2.500" height="2.500"/><rect x="13" y="6.500" width="2.500" height="2.500"/><rect x="11" y="11" width="2.500" height="2.500"/><rect x="6.500" y="13" width="2.500" height="2.500"/><rect x="2" y="11" width="2.500" height="2.500"/><rect x="0" y="6.500" width="2.500" height="2.500"/><rect x="2" y="2" width="2.500" height="2.500"/></g></svg>
<svg class="abs" style="left:696px;top:643px;opacity:.42" width="16" height="16" viewBox="0 0 16 16"><g fill="#5aa9e6"><rect x="6.500" y="0" width="2.500" height="2.500"/><rect x="11" y="2" width="2.500" height="2.500"/><rect x="13" y="6.500" width="2.500" height="2.500"/><rect x="11" y="11" width="2.500" height="2.500"/><rect x="6.500" y="13" width="2.500" height="2.500"/><rect x="2" y="11" width="2.500" height="2.500"/><rect x="0" y="6.500" width="2.500" height="2.500"/><rect x="2" y="2" width="2.500" height="2.500"/></g></svg>
<svg class="abs" style="left:720px;top:643px;opacity:.42" width="16" height="16" viewBox="0 0 16 16"><g fill="#5aa9e6"><rect x="6.500" y="0" width="2.500" height="2.500"/><rect x="11" y="2" width="2.500" height="2.500"/><rect x="13" y="6.500" width="2.500" height="2.500"/><rect x="11" y="11" width="2.500" height="2.500"/><rect x="6.500" y="13" width="2.500" height="2.500"/><rect x="2" y="11" width="2.500" height="2.500"/><rect x="0" y="6.500" width="2.500" height="2.500"/><rect x="2" y="2" width="2.500" height="2.500"/></g></svg>
<svg class="abs" style="left:744px;top:643px;opacity:.42" width="16" height="16" viewBox="0 0 16 16"><g fill="#5aa9e6"><rect x="6.500" y="0" width="2.500" height="2.500"/><rect x="11" y="2" width="2.500" height="2.500"/><rect x="13" y="6.500" width="2.500" height="2.500"/><rect x="11" y="11" width="2.500" height="2.500"/><rect x="6.500" y="13" width="2.500" height="2.500"/><rect x="2" y="11" width="2.500" height="2.500"/><rect x="0" y="6.500" width="2.500" height="2.500"/><rect x="2" y="2" width="2.500" height="2.500"/></g></svg>
<svg class="abs" style="left:768px;top:643px;opacity:.42" width="16" height="16" viewBox="0 0 16 16"><g fill="#5aa9e6"><rect x="6.500" y="0" width="2.500" height="2.500"/><rect x="11" y="2" width="2.500" height="2.500"/><rect x="13" y="6.500" width="2.500" height="2.500"/><rect x="11" y="11" width="2.500" height="2.500"/><rect x="6.500" y="13" width="2.500" height="2.500"/><rect x="2" y="11" width="2.500" height="2.500"/><rect x="0" y="6.500" width="2.500" height="2.500"/><rect x="2" y="2" width="2.500" height="2.500"/></g></svg>
<svg class="abs" style="left:792px;top:643px;opacity:.42" width="16" height="16" viewBox="0 0 16 16"><g fill="#5aa9e6"><rect x="6.500" y="0" width="2.500" height="2.500"/><rect x="11" y="2" width="2.500" height="2.500"/><rect x="13" y="6.500" width="2.500" height="2.500"/><rect x="11" y="11" width="2.500" height="2.500"/><rect x="6.500" y="13" width="2.500" height="2.500"/><rect x="2" y="11" width="2.500" height="2.500"/><rect x="0" y="6.500" width="2.500" height="2.500"/><rect x="2" y="2" width="2.500" height="2.500"/></g></svg>
<svg class="abs" style="left:816px;top:643px;opacity:.42" width="16" height="16" viewBox="0 0 16 16"><path d="M1 15v-10l4-4h3a7 7 0 0 1 7 7v4l-3 3z" fill="#dedede" stroke="#666" stroke-width="1" stroke-linejoin="round"/><path d="M8 1a7 7 0 0 1 7 7l-3 2.500a5.500 5.500 0 0 0-5.500-6z" fill="#5aa9e6"/></svg>
<svg class="abs" style="left:840px;top:643px;opacity:.42" width="16" height="16" viewBox="0 0 16 16"><rect x="1.500" y="1.500" width="12" height="12" fill="none" stroke="#555" stroke-width="1" stroke-dasharray="8 2.500"/><rect x="0" y="0" width="2.500" height="2.500" fill="#1e88e5"/><rect x="12" y="0" width="2.500" height="2.500" fill="#1e88e5"/><rect x="0" y="12" width="2.500" height="2.500" fill="#1e88e5"/><path d="M8 15.500l1-3 5-5 2 2-5 5z" fill="#f5a623"/><path d="M14 7.500l1-1q1-.5 1.500.5t-.5 1.500l-1 1z" fill="#e53935"/><path d="M8 15.500l.5-1.700 1.200 1.200z" fill="#444"/></svg>
<svg class="abs" style="left:864px;top:643px;opacity:.42" width="16" height="16" viewBox="0 0 16 16"><path d="M1 13l2.500-1.500h8l-2.500 2v1.300h-8z" fill="#c9c9c9"/><path d="M1 3.500l2-2.300h8.500v9.300l-2.500 2.500h-8z" fill="#5aa9e6"/><path d="M9 4l2.500-2.800v9.300l-2.500 2.500z" fill="#3f8fd2"/><path d="M1 3.500l2-2.300h8.500l-2.500 2.800z" fill="#86c4f2"/><path d="M13.800 14.500v-12" stroke="#222" stroke-width="1"/><path d="M12.200 4l1.600-3.300 1.600 3.300z" fill="#222"/></svg>
<svg class="abs" style="left:888px;top:643px;opacity:.42" width="16" height="16" viewBox="0 0 16 16"><path d="M1 15v-10l4-4h3a7 7 0 0 1 7 7v4l-3 3z" fill="#dedede" stroke="#666" stroke-width="1" stroke-linejoin="round"/><path d="M8 1a7 7 0 0 1 7 7l-3 2.500a5.500 5.500 0 0 0-5.500-6z" fill="#5aa9e6"/></svg>
<svg class="abs" style="left:912px;top:643px;opacity:.42" width="16" height="16" viewBox="0 0 16 16"><path d="M1 13l2.500-1.500h8l-2.500 2v1.300h-8z" fill="#c9c9c9"/><path d="M1 3.500l2-2.300h8.500v9.300l-2.500 2.500h-8z" fill="#5aa9e6"/><path d="M9 4l2.500-2.800v9.300l-2.500 2.500z" fill="#3f8fd2"/><path d="M1 3.500l2-2.300h8.500l-2.500 2.800z" fill="#86c4f2"/><path d="M13.800 14.500v-12" stroke="#222" stroke-width="1"/><path d="M12.200 4l1.600-3.300 1.600 3.300z" fill="#222"/></svg>
<svg class="abs" style="left:936px;top:643px;opacity:.42" width="16" height="16" viewBox="0 0 16 16"><rect x="1.500" y="1.500" width="12" height="12" fill="none" stroke="#555" stroke-width="1" stroke-dasharray="8 2.500"/><rect x="0" y="0" width="2.500" height="2.500" fill="#1e88e5"/><rect x="12" y="0" width="2.500" height="2.500" fill="#1e88e5"/><rect x="0" y="12" width="2.500" height="2.500" fill="#1e88e5"/><path d="M8 15.500l1-3 5-5 2 2-5 5z" fill="#f5a623"/><path d="M14 7.500l1-1q1-.5 1.500.5t-.5 1.500l-1 1z" fill="#e53935"/><path d="M8 15.500l.5-1.700 1.200 1.200z" fill="#444"/></svg>
<svg class="abs" style="left:960px;top:643px;opacity:.42" width="16" height="16" viewBox="0 0 16 16"><path d="M1 13l2.500-1.500h8l-2.500 2v1.300h-8z" fill="#c9c9c9"/><path d="M1 3.500l2-2.300h8.500v9.300l-2.500 2.500h-8z" fill="#5aa9e6"/><path d="M9 4l2.500-2.800v9.300l-2.500 2.500z" fill="#3f8fd2"/><path d="M1 3.500l2-2.300h8.500l-2.500 2.800z" fill="#86c4f2"/><path d="M13.800 14.500v-12" stroke="#222" stroke-width="1"/><path d="M12.200 4l1.600-3.300 1.600 3.300z" fill="#222"/></svg>
<svg class="abs" style="left:984px;top:643px;opacity:.42" width="16" height="16" viewBox="0 0 16 16"><path d="M1 8l1.500-2h4v-3l2-2.300h6.500v7.500l-2 2.300h-4v3l-1.500 2h-6.500z" fill="#5aa9e6"/><path d="M7.500 8l1.500-2v7.500l-1.500 2zM13 3l2-2.300v7.500l-2 2.300z" fill="#3f8fd2"/></svg>
<svg class="abs" style="left:1008px;top:643px;opacity:.42" width="16" height="16" viewBox="0 0 16 16"><path d="M1 15v-10l4-4h3a7 7 0 0 1 7 7v4l-3 3z" fill="#dedede" stroke="#666" stroke-width="1" stroke-linejoin="round"/><path d="M8 1a7 7 0 0 1 7 7l-3 2.500a5.500 5.500 0 0 0-5.500-6z" fill="#5aa9e6"/></svg>
<div class="abs" style="left:31px;top:662px;width:2px;height:6px;background:#cdcdcd"></div>
<div class="abs" style="left:55px;top:662px;width:2px;height:6px;background:#cdcdcd"></div>
<div class="abs" style="left:79px;top:662px;width:2px;height:6px;background:#cdcdcd"></div>
<div class="abs" style="left:103px;top:662px;width:2px;height:6px;background:#cdcdcd"></div>
<div class="abs" style="left:127px;top:662px;width:2px;height:6px;background:#cdcdcd"></div>
<div class="abs" style="left:151px;top:662px;width:2px;height:6px;background:#cdcdcd"></div>
<div class="abs" style="left:175px;top:662px;width:2px;height:6px;background:#cdcdcd"></div>
<div class="abs" style="left:199px;top:662px;width:2px;height:6px;background:#cdcdcd"></div>
<div class="abs" style="left:223px;top:662px;width:2px;height:6px;background:#cdcdcd"></div>
<div class="abs" style="left:247px;top:662px;width:2px;height:6px;background:#cdcdcd"></div>
<div class="abs" style="left:271px;top:662px;width:2px;height:6px;background:#cdcdcd"></div>
<div class="abs" style="left:295px;top:662px;width:2px;height:6px;background:#cdcdcd"></div>
<div class="abs" style="left:319px;top:662px;width:2px;height:6px;background:#cdcdcd"></div>
<div class="abs" style="left:343px;top:662px;width:2px;height:6px;background:#cdcdcd"></div>
<div class="abs" style="left:367px;top:662px;width:2px;height:6px;background:#cdcdcd"></div>
<div class="abs" style="left:391px;top:662px;width:2px;height:6px;background:#cdcdcd"></div>
<div class="abs" style="left:415px;top:662px;width:2px;height:6px;background:#cdcdcd"></div>
<div class="abs" style="left:439px;top:662px;width:2px;height:6px;background:#cdcdcd"></div>
<div class="abs" style="left:463px;top:662px;width:2px;height:6px;background:#cdcdcd"></div>
<div class="abs" style="left:487px;top:662px;width:2px;height:6px;background:#cdcdcd"></div>
<div class="abs" style="left:511px;top:662px;width:2px;height:6px;background:#cdcdcd"></div>
<div class="abs" style="left:535px;top:662px;width:2px;height:6px;background:#cdcdcd"></div>
<div class="abs" style="left:559px;top:662px;width:2px;height:6px;background:#cdcdcd"></div>
<div class="abs" style="left:583px;top:662px;width:2px;height:6px;background:#cdcdcd"></div>
<div class="abs" style="left:607px;top:662px;width:2px;height:6px;background:#cdcdcd"></div>
<div class="abs" style="left:631px;top:662px;width:2px;height:6px;background:#cdcdcd"></div>
<div class="abs" style="left:655px;top:662px;width:2px;height:6px;background:#cdcdcd"></div>
<div class="abs" style="left:679px;top:662px;width:2px;height:6px;background:#cdcdcd"></div>
<div class="abs" style="left:703px;top:662px;width:2px;height:6px;background:#cdcdcd"></div>
<div class="abs" style="left:727px;top:662px;width:2px;height:6px;background:#cdcdcd"></div>
<div class="abs" style="left:751px;top:662px;width:2px;height:6px;background:#cdcdcd"></div>
<div class="abs" style="left:775px;top:662px;width:2px;height:6px;background:#cdcdcd"></div>
<div class="abs" style="left:799px;top:662px;width:2px;height:6px;background:#cdcdcd"></div>
<div class="abs" style="left:823px;top:662px;width:2px;height:6px;background:#cdcdcd"></div>
<div class="abs" style="left:847px;top:662px;width:2px;height:6px;background:#cdcdcd"></div>
<div class="abs" style="left:871px;top:662px;width:2px;height:6px;background:#cdcdcd"></div>
<div class="abs" style="left:895px;top:662px;width:2px;height:6px;background:#cdcdcd"></div>
<div class="abs" style="left:919px;top:662px;width:2px;height:6px;background:#cdcdcd"></div>
<div class="abs" style="left:943px;top:662px;width:2px;height:6px;background:#cdcdcd"></div>
<div class="abs" style="left:967px;top:662px;width:2px;height:6px;background:#cdcdcd"></div>
<div class="abs" style="left:991px;top:662px;width:2px;height:6px;background:#cdcdcd"></div>
<div class="abs" style="left:1015px;top:662px;width:2px;height:6px;background:#cdcdcd"></div>
<svg class="abs" style="left:158px;top:641px" width="12" height="29" viewBox="0 0 12 29"><path d="M1 .5h10l-4 6v22h-2v-22z" fill="#222"/></svg>
<svg class="abs" style="left:1047px;top:646px" width="20" height="20" viewBox="-10 -10 20 20"><g fill="#6e6e6e"><circle r="6.200"/><rect x="-2" y="-8.600" width="4" height="5" transform="rotate(0)"/><rect x="-2" y="-8.600" width="4" height="5" transform="rotate(60)"/><rect x="-2" y="-8.600" width="4" height="5" transform="rotate(120)"/><rect x="-2" y="-8.600" width="4" height="5" transform="rotate(180)"/><rect x="-2" y="-8.600" width="4" height="5" transform="rotate(240)"/><rect x="-2" y="-8.600" width="4" height="5" transform="rotate(300)"/></g><circle r="2.800" fill="#f5f5f5"/></svg>
<div class="t" id="big" style="left:17.5px;top:674.7px;font-size:50px;font-weight:bold;color:#000;letter-spacing:1.8px">705248</div>
<div id="menu" class="abs" style="left:7px;top:109px;width:163px;height:531px;background:#fff;border:1px solid #c9c9c9;border-radius:0 0 4px 4px;box-shadow:0 1px 3px rgba(0,0,0,.18);"></div>
<svg class="abs" style="left:13px;top:114px" width="16" height="16" viewBox="0 0 16 16"><rect x="1.5" y="1.5" width="12" height="12.5" fill="none" stroke="#666" stroke-width="1" stroke-dasharray="5 2"/><rect x="0.5" y="0.5" width="2" height="2" fill="#444"/><rect x="12.5" y="0.5" width="2" height="2" fill="#444"/><rect x="0.5" y="12.8" width="2" height="2" fill="#444"/><rect x="8" y="8.5" width="8" height="7.5" fill="#fff"/><path d="M11.80 8.20V16.20M7.80 12.20H15.80" stroke="#22a843" stroke-width="2.4" fill="none"/></svg>
<div class="t mi" style="left:32.6px;top:116px">Create Sketch</div>
<svg class="abs" style="left:13px;top:134px" width="16" height="16" viewBox="0 0 16 16"><g transform="translate(0 -1.2)"><path d="M1 6q0-4.5 5-4.5h5q3 0 3 3v6q0 2-2 2.5l-4 1.5q-1.5.5-3 0l-3-1q-1-.5-1-2z" fill="#9a6fd3"/><path d="M1.5 6q0-3.5 4.5-3.5h5q2 0 2.5 1.5q-4-.5-8 .5t-4 3z" fill="#c3a4ea"/><path d="M6.8 6v8.6M1.200 8.500q3 1.200 5.600 .500" stroke="#7447b8" stroke-width="0.8" fill="none"/></g><rect x="8" y="8.5" width="8" height="7.5" fill="#fff"/><path d="M11.80 8.20V16.20M7.80 12.20H15.80" stroke="#22a843" stroke-width="2.4" fill="none"/></svg>
<div class="t mi" style="left:32.6px;top:136px">Create Form</div>
<svg class="abs" style="left:13px;top:154px" width="16" height="16" viewBox="0 0 16 16"><path d="M2.5 5.5l3.5-3.5h8v8l-3.5 3.5h-8z" fill="#e3e3e3" stroke="#555" stroke-width="1" stroke-linejoin="round"/><path d="M10.5 5.5v8M10.5 5.5l3.5-3.5" fill="none" stroke="#999" stroke-width=".7"/><path d="M10.5 13.5l3.5-3.5v-8l-3.5 3.5z" fill="#c4c4c4"/><path d="M.8 15.300Q1.300 12 5 12" fill="none" stroke="#222" stroke-width="1.700"/><path d="M4.300 9.200L8.200 12L4.300 14.800z" fill="#222"/></svg>
<div class="t mi" style="left:32.6px;top:156px">Derive</div>
<div class="abs" style="left:12px;top:172px;width:155px;height:1px;background:#2a2a2a"></div>
<svg class="abs" style="left:13px;top:175px" width="16" height="16" viewBox="0 0 16 16"><path d="M1 13l2.500-1.500h8l-2.500 2v1.300h-8z" fill="#c9c9c9"/><path d="M1 3.500l2-2.300h8.500v9.300l-2.500 2.500h-8z" fill="#5aa9e6"/><path d="M9 4l2.500-2.800v9.300l-2.500 2.500z" fill="#3f8fd2"/><path d="M1 3.500l2-2.300h8.500l-2.500 2.800z" fill="#86c4f2"/><path d="M13.800 14.500v-12" stroke="#222" stroke-width="1"/><path d="M12.200 4l1.600-3.300 1.600 3.300z" fill="#222"/></svg>
<div class="t mi" style="left:32.6px;top:177px">Extrude</div>
<div class="t mi" style="left:133.3px;top:177px">E</div>
<svg class="abs" style="left:13px;top:195px" width="16" height="16" viewBox="0 0 16 16"><path d="M2.300 3.800q5.500-3.800 11.700-.8" fill="none" stroke="#222" stroke-width="1"/><path d="M.8 5.200l1-3 2 2.300z" fill="#222"/><path d="M1 8q6-5 14-1.500v5.500q-2-1.500-4-1.300t-4.500 3.300q-3 1-5.500-1z" fill="#5aa9e6"/><path d="M1 8q6-5 14-1.500l-3 2.500q-4-1.500-7.500 1z" fill="#86c4f2"/><path d="M12.300 9.300l2.700-2v4.700l-2.700 1.800z" fill="#fff" stroke="#444" stroke-width=".9"/></svg>
<div class="t mi" style="left:32.6px;top:197px">Revolve</div>
<svg class="abs" style="left:13px;top:215px" width="16" height="16" viewBox="0 0 16 16"><path d="M1 5q0-2 2-2h1.500q0-2 2-2h3.500v3h5v9.500l-1.500 1h-4v-5h-4.500v2.500q-4-.5-4-3.500z" fill="#5aa9e6"/><path d="M1 5q0-2 2-2h1.500q0-2 2-2h3.500v3h-3.500q-1.500 0-1.500 1.500h-2q-2 0-2 2z" fill="#86c4f2"/><rect x="5.700" y="9.700" width="5.600" height="5.600" fill="#fff" stroke="#444" stroke-width="1.100"/></svg>
<div class="t mi" style="left:32.6px;top:217px">Sweep</div>
<svg class="abs" style="left:13px;top:235px" width="16" height="16" viewBox="0 0 16 16"><path d="M0.500 1h15v9.500l-3.500 2h-8l-3.500-2z" fill="#3f8fd2"/><path d="M.5 1h15l-3.500 8.500h-8z" fill="#86c4f2"/><circle cx="8" cy="12" r="3.400" fill="#fff" stroke="#444" stroke-width="1.100"/></svg>
<div class="t mi" style="left:32.6px;top:237px">Loft</div>
<svg class="abs" style="left:13px;top:255px" width="16" height="16" viewBox="0 0 16 16"><path d="M4.500 1.200l-3.300 4.300v9h8.500l4.800-3.300" fill="none" stroke="#b4b4b4" stroke-width="1.500" stroke-linejoin="round"/><path d="M3.500 4.500q2.500 4.500 7.500 7l-2 1.500h-5.500z" fill="#5aa9e6"/><path d="M3.500 4.500q2.500 4.500 7.500 7l-.8.600q-4.500-2.300-6.700-6z" fill="#3f8fd2"/></svg>
<div class="t mi" style="left:32.6px;top:257px">Rib</div>
<svg class="abs" style="left:13px;top:275px" width="16" height="16" viewBox="0 0 16 16"><rect x=".8" y="1.300" width="14.400" height="14" rx="1" fill="#e6e6e6" stroke="#444" stroke-width="1.100"/><rect x="3" y="3.500" width="10" height="9.600" fill="#5aa9e6" stroke="#777" stroke-width=".8"/><rect x="3.500" y="4" width="3" height="2.800" fill="#eee"/><rect x="9.500" y="4" width="3" height="2.800" fill="#eee"/><rect x="3.500" y="9.800" width="3" height="2.800" fill="#eee"/><rect x="9.500" y="9.800" width="3" height="2.800" fill="#eee"/></svg>
<div class="t mi" style="left:32.6px;top:277px">Web</div>
<svg class="abs" style="left:13px;top:295px" width="16" height="16" viewBox="0 0 16 16"><path d="M.8 15.500v-7l7-5q6.500 3 6.700 12z" fill="#e2e2e2"/><path d="M.8 1.200q13 0 14 14.300" fill="none" stroke="#555" stroke-width="1"/><path d="M2 7.800L6.500 3.300L11.800 7.800M4.250 5.550L9 9.500M2 7.800L7.300 12.300" fill="none" stroke="#5aa9e6" stroke-width="1.600"/></svg>
<div class="t mi" style="left:32.6px;top:297px">Emboss</div>
<div class="abs" style="left:12px;top:313px;width:155px;height:1px;background:#2a2a2a"></div>
<svg class="abs" style="left:13px;top:316px" width="16" height="16" viewBox="0 0 16 16"><path d="M.8 4.500l3.200-3.500h11.200v11l-3 3.500h-11.400z" fill="#dcdcdc" stroke="#555" stroke-width="1" stroke-linejoin="round"/><path d="M12.200 4.500v11l3-3.500v-11z" fill="#bdbdbd"/><circle cx="6.500" cy="9.500" r="4" fill="#fff" stroke="#555" stroke-width="1"/><path d="M3.500 9.500a3 3 0 0 0 5.800 1.200a3.600 3.600 0 0 1-3.800-4a3 3 0 0 0-2 2.800z" fill="#3f8fd2"/></svg>
<div class="t mi" style="left:32.6px;top:318px">Hole</div>
<div class="t mi" style="left:133.3px;top:318px">H</div>
<svg class="abs" style="left:13px;top:336px" width="16" height="16" viewBox="0 0 16 16"><rect x="3.300" y="1" width="9.500" height="14.300" fill="#fff" stroke="#555" stroke-width="1"/><path d="M.8 7.300l14.500-3.300M.8 10l14.500-3.300M.8 12.700l14.500-3.300" stroke="#2e8fe6" stroke-width="1.400"/></svg>
<div class="t mi" style="left:32.6px;top:338px">Thread</div>
<div class="abs" style="left:12px;top:354px;width:155px;height:1px;background:#2a2a2a"></div>
<svg class="abs" style="left:13px;top:357px" width="16" height="16" viewBox="0 0 16 16"><path d="M1 4.500l3-3.500h11v10.500l-3 3.500h-11z" fill="#5aa9e6" stroke="#3a86c8" stroke-width=".8" stroke-linejoin="round"/><path d="M12 4.500l3-3.500v10.500l-3 3.500z" fill="#3f8fd2"/><path d="M1 4.500l3-3.500h11l-3 3.500z" fill="#86c4f2"/></svg>
<div class="t mi" style="left:32.6px;top:359px">Box</div>
<svg class="abs" style="left:13px;top:377px" width="16" height="16" viewBox="0 0 16 16"><path d="M1 3.500v9.500a7 2.800 0 0 0 14 0v-9.500z" fill="#5aa9e6" stroke="#3a86c8" stroke-width=".8"/><ellipse cx="8" cy="3.500" rx="7" ry="2.600" fill="#86c4f2" stroke="#3a86c8" stroke-width=".8"/></svg>
<div class="t mi" style="left:32.6px;top:379px">Cylinder</div>
<svg class="abs" style="left:13px;top:397px" width="16" height="16" viewBox="0 0 16 16"><circle cx="8" cy="8" r="7.300" fill="#86c4f2" stroke="#3a86c8" stroke-width=".8"/><path d="M.5 8a7.500 7.500 0 0 0 15 0a7.500 3 0 0 1-15 0z" fill="#5aa9e6" opacity=".8"/></svg>
<div class="t mi" style="left:32.6px;top:399px">Sphere</div>
<svg class="abs" style="left:13px;top:417px" width="16" height="16" viewBox="0 0 16 16"><ellipse cx="8" cy="8.200" rx="7.600" ry="5.700" fill="#86c4f2" stroke="#5aa9e6" stroke-width=".8"/><ellipse cx="8" cy="7.200" rx="3.200" ry="1.400" fill="#fff" stroke="#3f8fd2" stroke-width=".8"/></svg>
<div class="t mi" style="left:32.6px;top:419px">Torus</div>
<div class="abs" style="left:12px;top:435px;width:155px;height:20px;background:#efefef"></div>
<div class="abs" style="left:154px;top:439px;width:2px;height:2px;background:#7a7a7a"></div>
<div class="abs" style="left:154px;top:444px;width:2px;height:2px;background:#7a7a7a"></div>
<div class="abs" style="left:154px;top:449px;width:2px;height:2px;background:#7a7a7a"></div>
<svg class="abs" style="left:13px;top:437px" width="16" height="16" viewBox="0 0 16 16"><path d="M13.500 3L2.500 9.500M13.500 8L2.500 14.500" fill="none" stroke="#3f8fd2" stroke-width="2"/><path d="M2.500 4.800L13.500 1.800M2.500 9.800L13.500 6.800M2.500 14.800L13.500 11.800" fill="none" stroke="#5aa9e6" stroke-width="2.800"/></svg>
<div class="t mi" style="left:32.6px;top:439px">Coil</div>
<svg class="abs" style="left:13px;top:457px" width="16" height="16" viewBox="0 0 16 16"><path d="M3.300 7.500l9.500-3.500a2.500 2.500 0 0 1 .5 5l-9.500 3.500a2.700 2.600 0 0 1-.5-5z" fill="#5aa9e6"/><ellipse cx="3.300" cy="10" rx="2" ry="2.600" transform="rotate(-15 3.300 10)" fill="#86c4f2"/></svg>
<div class="t mi" style="left:32.6px;top:459px">Pipe</div>
<div class="abs" style="left:12px;top:475px;width:155px;height:1px;background:#2a2a2a"></div>
<svg class="abs" style="left:13px;top:478px" width="16" height="16" viewBox="0 0 16 16"><path d="M1.500 4.500l3-3.500h10.500v10.500l-3 3.500h-10.500z" fill="#5aa9e6" stroke="#3a86c8" stroke-width=".9" stroke-linejoin="round"/><path d="M12 4.500l3-3.500v10.500l-3 3.500z" fill="#3f8fd2"/><rect x="4" y="6" width="5.500" height="5.500" fill="#d0d4d8" stroke="#8a8a8a" stroke-width=".8"/></svg>
<div class="t mi" style="left:32.6px;top:480px">Bounding Solid</div>
<div class="abs" style="left:12px;top:496px;width:155px;height:1px;background:#2a2a2a"></div>
<div class="t mi" style="left:32.6px;top:501px">Pattern</div>
<div class="abs" style="left:154px;top:502px;width:0;height:0;border-top:5px solid transparent;border-bottom:5px solid transparent;border-left:8px solid #7a7a7a"></div>
<svg class="abs" style="left:13px;top:519px" width="16" height="16" viewBox="0 0 16 16"><path d="M6.300 1.500v13h-5.300z" fill="#fff" stroke="#555" stroke-width="1" stroke-linejoin="round"/><path d="M8.300 1.500v13h6.700z" fill="#5aa9e6"/></svg>
<div class="t mi" style="left:32.6px;top:521px">Mirror</div>
<div class="abs" style="left:12px;top:537px;width:155px;height:1px;background:#2a2a2a"></div>
<svg class="abs" style="left:13px;top:540px" width="16" height="16" viewBox="0 0 16 16"><path d="M.8 8.500l7.500-6.500 7 3.500v3l-7.500 6.500-7-3.500z" fill="#3f8fd2"/><path d="M.8 8.500l7.500-6.500 7 3.500-7.500 6.500z" fill="#f4f4f4" stroke="#5aa9e6" stroke-width="1"/></svg>
<div class="t mi" style="left:32.6px;top:542px">Thicken</div>
<svg class="abs" style="left:13px;top:560px" width="16" height="16" viewBox="0 0 16 16"><circle cx="6" cy="10" r="5.500" fill="#e8935a"/><rect x="6" y=".8" width="9.200" height="9.200" fill="#e8935a"/><path d="M5.500 4.500h1a5 5 0 0 1 4.500 5v.5h-5.500z" fill="#4f9fe0" stroke="#fff" stroke-width="1.200"/></svg>
<div class="t mi" style="left:32.6px;top:562px">Boundary Fill</div>
<div class="abs" style="left:12px;top:578px;width:155px;height:1px;background:#2a2a2a"></div>
<svg class="abs" style="left:13px;top:581px" width="16" height="16" viewBox="0 0 16 16"><path d="M1 6l3.500-3.500h9.500v8l-3.500 4h-9.500z" fill="#e0e0e0" stroke="#555" stroke-width="1" stroke-linejoin="round"/><path d="M10.500 6.500v8l3.500-4v-8z" fill="#c8c8c8"/><path d="M11.500 0l.9 2.800 2.800-1.300-1.400 2.700 2.700 1-2.800.9 1.200 2.800-2.600-1.500-1 2.800-.8-2.900-2.800 1.300 1.500-2.600-2.700-1 2.800-.8-1.200-2.800 2.600 1.500z" fill="#ffa410"/></svg>
<div class="t mi" style="left:32.6px;top:583px">Create Base Feature</div>
<div class="t mi" style="left:32.6px;top:603px">Create PCB</div>
<div class="abs" style="left:154px;top:604px;width:0;height:0;border-top:5px solid transparent;border-bottom:5px solid transparent;border-left:8px solid #7a7a7a"></div>
<svg class="abs" style="left:13px;top:621px" width="16" height="16" viewBox="0 0 16 16"><path d="M12 3.200a6.300 6.300 0 1 0 2.300 7" fill="none" stroke="#555" stroke-width="1"/><path d="M10 5.800a3.300 3.300 0 1 0 1.200 3.800" fill="none" stroke="#555" stroke-width="1"/><path d="M7.500 0v2.800" stroke="#6a9a1a" stroke-width="1.200"/><path d="M13 8h2.800" stroke="#e0204a" stroke-width="1.200"/><path d="M7.500 2.800v2M11 8h2" stroke="#555" stroke-width="1"/></svg>
<div class="t mi" style="left:32.6px;top:623px">Joint Origin</div>
<div id="tip" class="abs" style="left:176px;top:439px;width:336px;height:290px;background:#555555;border-radius:13px 13px 0 0;"></div>
<div class="t tp" id="tp0" style="left:192px;top:468px">Creates a solid coil.</div>
<div class="t tp" id="tp1" style="left:192px;top:500px">Select a plane then draw a circle to specify the major</div>
<div class="t tp" id="tp2" style="left:192px;top:516px">diameter of the coil. Finish defining the coil using</div>
<div class="t tp" id="tp3" style="left:192px;top:532px">the manipulators or dialog box.</div>
<svg class="abs" style="left:176px;top:439px" width="336" height="277" viewBox="176 439 336 277">
<defs>
<linearGradient id="cg1" gradientUnits="userSpaceOnUse" x1="262" y1="0" x2="417" y2="0"><stop offset="0" stop-color="#7f7c74"/><stop offset=".15" stop-color="#a19e94"/><stop offset=".5" stop-color="#8e8b81"/><stop offset=".8" stop-color="#807d74"/><stop offset="1" stop-color="#615f58"/></linearGradient>
<linearGradient id="cg2" gradientUnits="userSpaceOnUse" x1="262" y1="0" x2="417" y2="0"><stop offset="0" stop-color="#c4c1b8"/><stop offset=".22" stop-color="#f3f2ec"/><stop offset=".55" stop-color="#d8d5cc"/><stop offset=".8" stop-color="#e2e0d8"/><stop offset="1" stop-color="#a19e94"/></linearGradient>
<linearGradient id="hg" x1="0" y1="0" x2="0" y2="1"><stop offset="0" stop-color="#4a4843"/><stop offset=".4" stop-color="#6f6c64"/><stop offset=".7" stop-color="#a29f95"/><stop offset="1" stop-color="#6a6860"/></linearGradient>
</defs>
<path d="M402.0 712.4 L402.1 714.1 L402.0 715.7 L401.8 717.4 L401.5 719.0 L401.0 720.6 L400.4 722.3 L399.7 723.9 L398.8 725.4 L397.8 727.0 L396.7 728.5 L395.4 730.1 L394.0 731.5 L392.5 733.0 L390.9 734.4 L389.2 735.8 L387.3 737.1 L385.4 738.4 L383.3 739.7 L381.2 740.9 L379.0 742.1 L376.6 743.2 L374.2 744.2 L371.7 745.2 L369.2 746.2 L366.6 747.1 L363.9 747.9 L361.2 748.7 L358.4 749.4 L355.6 750.0 L352.7 750.6 L349.8 751.2 L346.9 751.6 L344.0 752.0 L341.1 752.4 L338.1 752.6 L335.2 752.8 L332.3 753.0 L329.4 753.0 L326.5 753.1 L323.6 753.0 L320.8 752.9 L318.0 752.7 L315.3 752.5 L312.6 752.2 L310.0 751.8 L307.5 751.4 L305.0 751.0 L302.6 750.4 L300.2 749.9 L298.0 749.2 L295.9 748.6 L293.8 747.9 L291.9 747.1 L290.0 746.3 L288.3 745.4 L286.7 744.6 L285.2 743.7 L283.8 742.7 L282.5 741.7 L281.4 740.7 L280.4 739.7 L279.5 738.7 L278.8 737.6 L278.2 736.5 L277.7 735.4 L277.4 734.3 L277.2 733.2 L277.1 732.1 L277.2 731.0" fill="none" stroke="#37362f" stroke-width="30.0"/>
<path d="M402.0 712.4 L402.1 714.1 L402.0 715.7 L401.8 717.4 L401.5 719.0 L401.0 720.6 L400.4 722.3 L399.7 723.9 L398.8 725.4 L397.8 727.0 L396.7 728.5 L395.4 730.1 L394.0 731.5 L392.5 733.0 L390.9 734.4 L389.2 735.8 L387.3 737.1 L385.4 738.4 L383.3 739.7 L381.2 740.9 L379.0 742.1 L376.6 743.2 L374.2 744.2 L371.7 745.2 L369.2 746.2 L366.6 747.1 L363.9 747.9 L361.2 748.7 L358.4 749.4 L355.6 750.0 L352.7 750.6 L349.8 751.2 L346.9 751.6 L344.0 752.0 L341.1 752.4 L338.1 752.6 L335.2 752.8 L332.3 753.0 L329.4 753.0 L326.5 753.1 L323.6 753.0 L320.8 752.9 L318.0 752.7 L315.3 752.5 L312.6 752.2 L310.0 751.8 L307.5 751.4 L305.0 751.0 L302.6 750.4 L300.2 749.9 L298.0 749.2 L295.9 748.6 L293.8 747.9 L291.9 747.1 L290.0 746.3 L288.3 745.4 L286.7 744.6 L285.2 743.7 L283.8 742.7 L282.5 741.7 L281.4 740.7 L280.4 739.7 L279.5 738.7 L278.8 737.6 L278.2 736.5 L277.7 735.4 L277.4 734.3 L277.2 733.2 L277.1 732.1 L277.2 731.0" fill="none" stroke="url(#cg1)" stroke-width="27.4"/>
<path d="M402.0 712.4 L402.1 714.1 L402.0 715.7 L401.8 717.4 L401.5 719.0 L401.0 720.6 L400.4 722.3 L399.7 723.9 L398.8 725.4 L397.8 727.0 L396.7 728.5 L395.4 730.1 L394.0 731.5 L392.5 733.0 L390.9 734.4 L389.2 735.8 L387.3 737.1 L385.4 738.4 L383.3 739.7 L381.2 740.9 L379.0 742.1 L376.6 743.2 L374.2 744.2 L371.7 745.2 L369.2 746.2 L366.6 747.1 L363.9 747.9 L361.2 748.7 L358.4 749.4 L355.6 750.0 L352.7 750.6 L349.8 751.2 L346.9 751.6 L344.0 752.0 L341.1 752.4 L338.1 752.6 L335.2 752.8 L332.3 753.0 L329.4 753.0 L326.5 753.1 L323.6 753.0 L320.8 752.9 L318.0 752.7 L315.3 752.5 L312.6 752.2 L310.0 751.8 L307.5 751.4 L305.0 751.0 L302.6 750.4 L300.2 749.9 L298.0 749.2 L295.9 748.6 L293.8 747.9 L291.9 747.1 L290.0 746.3 L288.3 745.4 L286.7 744.6 L285.2 743.7 L283.8 742.7 L282.5 741.7 L281.4 740.7 L280.4 739.7 L279.5 738.7 L278.8 737.6 L278.2 736.5 L277.7 735.4 L277.4 734.3 L277.2 733.2 L277.1 732.1 L277.2 731.0" fill="none" stroke="#4f4d47" stroke-width="8.7" transform="translate(0 8.7)" opacity=".55"/>
<path d="M402.0 712.4 L402.1 714.1 L402.0 715.7 L401.8 717.4 L401.5 719.0 L401.0 720.6 L400.4 722.3 L399.7 723.9 L398.8 725.4 L397.8 727.0 L396.7 728.5 L395.4 730.1 L394.0 731.5 L392.5 733.0 L390.9 734.4 L389.2 735.8 L387.3 737.1 L385.4 738.4 L383.3 739.7 L381.2 740.9 L379.0 742.1 L376.6 743.2 L374.2 744.2 L371.7 745.2 L369.2 746.2 L366.6 747.1 L363.9 747.9 L361.2 748.7 L358.4 749.4 L355.6 750.0 L352.7 750.6 L349.8 751.2 L346.9 751.6 L344.0 752.0 L341.1 752.4 L338.1 752.6 L335.2 752.8 L332.3 753.0 L329.4 753.0 L326.5 753.1 L323.6 753.0 L320.8 752.9 L318.0 752.7 L315.3 752.5 L312.6 752.2 L310.0 751.8 L307.5 751.4 L305.0 751.0 L302.6 750.4 L300.2 749.9 L298.0 749.2 L295.9 748.6 L293.8 747.9 L291.9 747.1 L290.0 746.3 L288.3 745.4 L286.7 744.6 L285.2 743.7 L283.8 742.7 L282.5 741.7 L281.4 740.7 L280.4 739.7 L279.5 738.7 L278.8 737.6 L278.2 736.5 L277.7 735.4 L277.4 734.3 L277.2 733.2 L277.1 732.1 L277.2 731.0" fill="none" stroke="#b3b0a6" stroke-width="12.2" transform="translate(0 -4.1)" opacity=".6"/>
<path d="M402.0 712.4 L402.1 714.1 L402.0 715.7 L401.8 717.4 L401.5 719.0 L401.0 720.6 L400.4 722.3 L399.7 723.9 L398.8 725.4 L397.8 727.0 L396.7 728.5 L395.4 730.1 L394.0 731.5 L392.5 733.0 L390.9 734.4 L389.2 735.8 L387.3 737.1 L385.4 738.4 L383.3 739.7 L381.2 740.9 L379.0 742.1 L376.6 743.2 L374.2 744.2 L371.7 745.2 L369.2 746.2 L366.6 747.1 L363.9 747.9 L361.2 748.7 L358.4 749.4 L355.6 750.0 L352.7 750.6 L349.8 751.2 L346.9 751.6 L344.0 752.0 L341.1 752.4 L338.1 752.6 L335.2 752.8 L332.3 753.0 L329.4 753.0 L326.5 753.1 L323.6 753.0 L320.8 752.9 L318.0 752.7 L315.3 752.5 L312.6 752.2 L310.0 751.8 L307.5 751.4 L305.0 751.0 L302.6 750.4 L300.2 749.9 L298.0 749.2 L295.9 748.6 L293.8 747.9 L291.9 747.1 L290.0 746.3 L288.3 745.4 L286.7 744.6 L285.2 743.7 L283.8 742.7 L282.5 741.7 L281.4 740.7 L280.4 739.7 L279.5 738.7 L278.8 737.6 L278.2 736.5 L277.7 735.4 L277.4 734.3 L277.2 733.2 L277.1 732.1 L277.2 731.0" fill="none" stroke="url(#cg2)" stroke-width="4.1" transform="translate(0 -5.8)" opacity=".85"/>
<path d="M277.2 697.4 L277.1 696.3 L277.2 695.2 L277.4 694.1 L277.7 693.0 L278.2 691.9 L278.8 690.8 L279.5 689.7 L280.4 688.7 L281.4 687.7 L282.5 686.7 L283.8 685.7 L285.2 684.7 L286.7 683.8 L288.3 683.0 L290.0 682.1 L291.9 681.3 L293.8 680.5 L295.9 679.8 L298.0 679.2 L300.2 678.5 L302.6 678.0 L305.0 677.4 L307.5 677.0 L310.0 676.6 L312.6 676.2 L315.3 675.9 L318.0 675.7 L320.8 675.5 L323.6 675.4 L326.5 675.3 L329.4 675.4 L332.3 675.4 L335.2 675.6 L338.1 675.8 L341.1 676.0 L344.0 676.4 L346.9 676.8 L349.8 677.2 L352.7 677.8 L355.6 678.4 L358.4 679.0 L361.2 679.7 L363.9 680.5 L366.6 681.3 L369.2 682.2 L371.7 683.2 L374.2 684.2 L376.6 685.2 L379.0 686.3 L381.2 687.5 L383.3 688.7 L385.4 690.0 L387.3 691.3 L389.2 692.6 L390.9 694.0 L392.5 695.4 L394.0 696.9 L395.4 698.3 L396.7 699.9 L397.8 701.4 L398.8 703.0 L399.7 704.5 L400.4 706.1 L401.0 707.8 L401.5 709.4 L401.8 711.0 L402.0 712.7 L402.1 714.3 L402.0 716.0" fill="none" stroke="#37362f" stroke-width="30.0"/>
<path d="M277.2 697.4 L277.1 696.3 L277.2 695.2 L277.4 694.1 L277.7 693.0 L278.2 691.9 L278.8 690.8 L279.5 689.7 L280.4 688.7 L281.4 687.7 L282.5 686.7 L283.8 685.7 L285.2 684.7 L286.7 683.8 L288.3 683.0 L290.0 682.1 L291.9 681.3 L293.8 680.5 L295.9 679.8 L298.0 679.2 L300.2 678.5 L302.6 678.0 L305.0 677.4 L307.5 677.0 L310.0 676.6 L312.6 676.2 L315.3 675.9 L318.0 675.7 L320.8 675.5 L323.6 675.4 L326.5 675.3 L329.4 675.4 L332.3 675.4 L335.2 675.6 L338.1 675.8 L341.1 676.0 L344.0 676.4 L346.9 676.8 L349.8 677.2 L352.7 677.8 L355.6 678.4 L358.4 679.0 L361.2 679.7 L363.9 680.5 L366.6 681.3 L369.2 682.2 L371.7 683.2 L374.2 684.2 L376.6 685.2 L379.0 686.3 L381.2 687.5 L383.3 688.7 L385.4 690.0 L387.3 691.3 L389.2 692.6 L390.9 694.0 L392.5 695.4 L394.0 696.9 L395.4 698.3 L396.7 699.9 L397.8 701.4 L398.8 703.0 L399.7 704.5 L400.4 706.1 L401.0 707.8 L401.5 709.4 L401.8 711.0 L402.0 712.7 L402.1 714.3 L402.0 716.0" fill="none" stroke="url(#cg1)" stroke-width="27.4"/>
<path d="M277.2 697.4 L277.1 696.3 L277.2 695.2 L277.4 694.1 L277.7 693.0 L278.2 691.9 L278.8 690.8 L279.5 689.7 L280.4 688.7 L281.4 687.7 L282.5 686.7 L283.8 685.7 L285.2 684.7 L286.7 683.8 L288.3 683.0 L290.0 682.1 L291.9 681.3 L293.8 680.5 L295.9 679.8 L298.0 679.2 L300.2 678.5 L302.6 678.0 L305.0 677.4 L307.5 677.0 L310.0 676.6 L312.6 676.2 L315.3 675.9 L318.0 675.7 L320.8 675.5 L323.6 675.4 L326.5 675.3 L329.4 675.4 L332.3 675.4 L335.2 675.6 L338.1 675.8 L341.1 676.0 L344.0 676.4 L346.9 676.8 L349.8 677.2 L352.7 677.8 L355.6 678.4 L358.4 679.0 L361.2 679.7 L363.9 680.5 L366.6 681.3 L369.2 682.2 L371.7 683.2 L374.2 684.2 L376.6 685.2 L379.0 686.3 L381.2 687.5 L383.3 688.7 L385.4 690.0 L387.3 691.3 L389.2 692.6 L390.9 694.0 L392.5 695.4 L394.0 696.9 L395.4 698.3 L396.7 699.9 L397.8 701.4 L398.8 703.0 L399.7 704.5 L400.4 706.1 L401.0 707.8 L401.5 709.4 L401.8 711.0 L402.0 712.7 L402.1 714.3 L402.0 716.0" fill="none" stroke="#4f4d47" stroke-width="8.7" transform="translate(0 8.7)" opacity=".55"/>
<path d="M277.2 697.4 L277.1 696.3 L277.2 695.2 L277.4 694.1 L277.7 693.0 L278.2 691.9 L278.8 690.8 L279.5 689.7 L280.4 688.7 L281.4 687.7 L282.5 686.7 L283.8 685.7 L285.2 684.7 L286.7 683.8 L288.3 683.0 L290.0 682.1 L291.9 681.3 L293.8 680.5 L295.9 679.8 L298.0 679.2 L300.2 678.5 L302.6 678.0 L305.0 677.4 L307.5 677.0 L310.0 676.6 L312.6 676.2 L315.3 675.9 L318.0 675.7 L320.8 675.5 L323.6 675.4 L326.5 675.3 L329.4 675.4 L332.3 675.4 L335.2 675.6 L338.1 675.8 L341.1 676.0 L344.0 676.4 L346.9 676.8 L349.8 677.2 L352.7 677.8 L355.6 678.4 L358.4 679.0 L361.2 679.7 L363.9 680.5 L366.6 681.3 L369.2 682.2 L371.7 683.2 L374.2 684.2 L376.6 685.2 L379.0 686.3 L381.2 687.5 L383.3 688.7 L385.4 690.0 L387.3 691.3 L389.2 692.6 L390.9 694.0 L392.5 695.4 L394.0 696.9 L395.4 698.3 L396.7 699.9 L397.8 701.4 L398.8 703.0 L399.7 704.5 L400.4 706.1 L401.0 707.8 L401.5 709.4 L401.8 711.0 L402.0 712.7 L402.1 714.3 L402.0 716.0" fill="none" stroke="#b3b0a6" stroke-width="12.2" transform="translate(0 -4.1)" opacity=".6"/>
<path d="M277.2 697.4 L277.1 696.3 L277.2 695.2 L277.4 694.1 L277.7 693.0 L278.2 691.9 L278.8 690.8 L279.5 689.7 L280.4 688.7 L281.4 687.7 L282.5 686.7 L283.8 685.7 L285.2 684.7 L286.7 683.8 L288.3 683.0 L290.0 682.1 L291.9 681.3 L293.8 680.5 L295.9 679.8 L298.0 679.2 L300.2 678.5 L302.6 678.0 L305.0 677.4 L307.5 677.0 L310.0 676.6 L312.6 676.2 L315.3 675.9 L318.0 675.7 L320.8 675.5 L323.6 675.4 L326.5 675.3 L329.4 675.4 L332.3 675.4 L335.2 675.6 L338.1 675.8 L341.1 676.0 L344.0 676.4 L346.9 676.8 L349.8 677.2 L352.7 677.8 L355.6 678.4 L358.4 679.0 L361.2 679.7 L363.9 680.5 L366.6 681.3 L369.2 682.2 L371.7 683.2 L374.2 684.2 L376.6 685.2 L379.0 686.3 L381.2 687.5 L383.3 688.7 L385.4 690.0 L387.3 691.3 L389.2 692.6 L390.9 694.0 L392.5 695.4 L394.0 696.9 L395.4 698.3 L396.7 699.9 L397.8 701.4 L398.8 703.0 L399.7 704.5 L400.4 706.1 L401.0 707.8 L401.5 709.4 L401.8 711.0 L402.0 712.7 L402.1 714.3 L402.0 716.0" fill="none" stroke="url(#cg2)" stroke-width="4.1" transform="translate(0 -5.8)" opacity=".85"/>
<ellipse cx="336.6" cy="692.5" rx="43" ry="10.800" fill="url(#hg)" stroke="#3a3934" stroke-width="1"/>
<path d="M402.0 676.4 L402.1 678.1 L402.0 679.7 L401.8 681.4 L401.5 683.0 L401.0 684.6 L400.4 686.3 L399.7 687.9 L398.8 689.4 L397.8 691.0 L396.7 692.5 L395.4 694.1 L394.0 695.5 L392.5 697.0 L390.9 698.4 L389.2 699.8 L387.3 701.1 L385.4 702.4 L383.3 703.7 L381.2 704.9 L379.0 706.1 L376.6 707.2 L374.2 708.2 L371.7 709.2 L369.2 710.2 L366.6 711.1 L363.9 711.9 L361.2 712.7 L358.4 713.4 L355.6 714.0 L352.7 714.6 L349.8 715.2 L346.9 715.6 L344.0 716.0 L341.1 716.4 L338.1 716.6 L335.2 716.8 L332.3 717.0 L329.4 717.0 L326.5 717.1 L323.6 717.0 L320.8 716.9 L318.0 716.7 L315.3 716.5 L312.6 716.2 L310.0 715.8 L307.5 715.4 L305.0 715.0 L302.6 714.4 L300.2 713.9 L298.0 713.2 L295.9 712.6 L293.8 711.9 L291.9 711.1 L290.0 710.3 L288.3 709.4 L286.7 708.6 L285.2 707.7 L283.8 706.7 L282.5 705.7 L281.4 704.7 L280.4 703.7 L279.5 702.7 L278.8 701.6 L278.2 700.5 L277.7 699.4 L277.4 698.3 L277.2 697.2 L277.1 696.1 L277.2 695.0" fill="none" stroke="#37362f" stroke-width="30.0"/>
<path d="M402.0 676.4 L402.1 678.1 L402.0 679.7 L401.8 681.4 L401.5 683.0 L401.0 684.6 L400.4 686.3 L399.7 687.9 L398.8 689.4 L397.8 691.0 L396.7 692.5 L395.4 694.1 L394.0 695.5 L392.5 697.0 L390.9 698.4 L389.2 699.8 L387.3 701.1 L385.4 702.4 L383.3 703.7 L381.2 704.9 L379.0 706.1 L376.6 707.2 L374.2 708.2 L371.7 709.2 L369.2 710.2 L366.6 711.1 L363.9 711.9 L361.2 712.7 L358.4 713.4 L355.6 714.0 L352.7 714.6 L349.8 715.2 L346.9 715.6 L344.0 716.0 L341.1 716.4 L338.1 716.6 L335.2 716.8 L332.3 717.0 L329.4 717.0 L326.5 717.1 L323.6 717.0 L320.8 716.9 L318.0 716.7 L315.3 716.5 L312.6 716.2 L310.0 715.8 L307.5 715.4 L305.0 715.0 L302.6 714.4 L300.2 713.9 L298.0 713.2 L295.9 712.6 L293.8 711.9 L291.9 711.1 L290.0 710.3 L288.3 709.4 L286.7 708.6 L285.2 707.7 L283.8 706.7 L282.5 705.7 L281.4 704.7 L280.4 703.7 L279.5 702.7 L278.8 701.6 L278.2 700.5 L277.7 699.4 L277.4 698.3 L277.2 697.2 L277.1 696.1 L277.2 695.0" fill="none" stroke="url(#cg1)" stroke-width="27.4"/>
<path d="M402.0 676.4 L402.1 678.1 L402.0 679.7 L401.8 681.4 L401.5 683.0 L401.0 684.6 L400.4 686.3 L399.7 687.9 L398.8 689.4 L397.8 691.0 L396.7 692.5 L395.4 694.1 L394.0 695.5 L392.5 697.0 L390.9 698.4 L389.2 699.8 L387.3 701.1 L385.4 702.4 L383.3 703.7 L381.2 704.9 L379.0 706.1 L376.6 707.2 L374.2 708.2 L371.7 709.2 L369.2 710.2 L366.6 711.1 L363.9 711.9 L361.2 712.7 L358.4 713.4 L355.6 714.0 L352.7 714.6 L349.8 715.2 L346.9 715.6 L344.0 716.0 L341.1 716.4 L338.1 716.6 L335.2 716.8 L332.3 717.0 L329.4 717.0 L326.5 717.1 L323.6 717.0 L320.8 716.9 L318.0 716.7 L315.3 716.5 L312.6 716.2 L310.0 715.8 L307.5 715.4 L305.0 715.0 L302.6 714.4 L300.2 713.9 L298.0 713.2 L295.9 712.6 L293.8 711.9 L291.9 711.1 L290.0 710.3 L288.3 709.4 L286.7 708.6 L285.2 707.7 L283.8 706.7 L282.5 705.7 L281.4 704.7 L280.4 703.7 L279.5 702.7 L278.8 701.6 L278.2 700.5 L277.7 699.4 L277.4 698.3 L277.2 697.2 L277.1 696.1 L277.2 695.0" fill="none" stroke="#4f4d47" stroke-width="8.7" transform="translate(0 8.7)" opacity=".55"/>
<path d="M402.0 676.4 L402.1 678.1 L402.0 679.7 L401.8 681.4 L401.5 683.0 L401.0 684.6 L400.4 686.3 L399.7 687.9 L398.8 689.4 L397.8 691.0 L396.7 692.5 L395.4 694.1 L394.0 695.5 L392.5 697.0 L390.9 698.4 L389.2 699.8 L387.3 701.1 L385.4 702.4 L383.3 703.7 L381.2 704.9 L379.0 706.1 L376.6 707.2 L374.2 708.2 L371.7 709.2 L369.2 710.2 L366.6 711.1 L363.9 711.9 L361.2 712.7 L358.4 713.4 L355.6 714.0 L352.7 714.6 L349.8 715.2 L346.9 715.6 L344.0 716.0 L341.1 716.4 L338.1 716.6 L335.2 716.8 L332.3 717.0 L329.4 717.0 L326.5 717.1 L323.6 717.0 L320.8 716.9 L318.0 716.7 L315.3 716.5 L312.6 716.2 L310.0 715.8 L307.5 715.4 L305.0 715.0 L302.6 714.4 L300.2 713.9 L298.0 713.2 L295.9 712.6 L293.8 711.9 L291.9 711.1 L290.0 710.3 L288.3 709.4 L286.7 708.6 L285.2 707.7 L283.8 706.7 L282.5 705.7 L281.4 704.7 L280.4 703.7 L279.5 702.7 L278.8 701.6 L278.2 700.5 L277.7 699.4 L277.4 698.3 L277.2 697.2 L277.1 696.1 L277.2 695.0" fill="none" stroke="#b3b0a6" stroke-width="12.2" transform="translate(0 -4.1)" opacity=".6"/>
<path d="M402.0 676.4 L402.1 678.1 L402.0 679.7 L401.8 681.4 L401.5 683.0 L401.0 684.6 L400.4 686.3 L399.7 687.9 L398.8 689.4 L397.8 691.0 L396.7 692.5 L395.4 694.1 L394.0 695.5 L392.5 697.0 L390.9 698.4 L389.2 699.8 L387.3 701.1 L385.4 702.4 L383.3 703.7 L381.2 704.9 L379.0 706.1 L376.6 707.2 L374.2 708.2 L371.7 709.2 L369.2 710.2 L366.6 711.1 L363.9 711.9 L361.2 712.7 L358.4 713.4 L355.6 714.0 L352.7 714.6 L349.8 715.2 L346.9 715.6 L344.0 716.0 L341.1 716.4 L338.1 716.6 L335.2 716.8 L332.3 717.0 L329.4 717.0 L326.5 717.1 L323.6 717.0 L320.8 716.9 L318.0 716.7 L315.3 716.5 L312.6 716.2 L310.0 715.8 L307.5 715.4 L305.0 715.0 L302.6 714.4 L300.2 713.9 L298.0 713.2 L295.9 712.6 L293.8 711.9 L291.9 711.1 L290.0 710.3 L288.3 709.4 L286.7 708.6 L285.2 707.7 L283.8 706.7 L282.5 705.7 L281.4 704.7 L280.4 703.7 L279.5 702.7 L278.8 701.6 L278.2 700.5 L277.7 699.4 L277.4 698.3 L277.2 697.2 L277.1 696.1 L277.2 695.0" fill="none" stroke="url(#cg2)" stroke-width="4.1" transform="translate(0 -5.8)" opacity=".85"/>
<path d="M277.2 661.4 L277.1 660.3 L277.2 659.2 L277.4 658.1 L277.7 657.0 L278.2 655.9 L278.8 654.8 L279.5 653.7 L280.4 652.7 L281.4 651.7 L282.5 650.7 L283.8 649.7 L285.2 648.7 L286.7 647.8 L288.3 647.0 L290.0 646.1 L291.9 645.3 L293.8 644.5 L295.9 643.8 L298.0 643.2 L300.2 642.5 L302.6 642.0 L305.0 641.4 L307.5 641.0 L310.0 640.6 L312.6 640.2 L315.3 639.9 L318.0 639.7 L320.8 639.5 L323.6 639.4 L326.5 639.3 L329.4 639.4 L332.3 639.4 L335.2 639.6 L338.1 639.8 L341.1 640.0 L344.0 640.4 L346.9 640.8 L349.8 641.2 L352.7 641.8 L355.6 642.4 L358.4 643.0 L361.2 643.7 L363.9 644.5 L366.6 645.3 L369.2 646.2 L371.7 647.2 L374.2 648.2 L376.6 649.2 L379.0 650.3 L381.2 651.5 L383.3 652.7 L385.4 654.0 L387.3 655.3 L389.2 656.6 L390.9 658.0 L392.5 659.4 L394.0 660.9 L395.4 662.3 L396.7 663.9 L397.8 665.4 L398.8 667.0 L399.7 668.5 L400.4 670.1 L401.0 671.8 L401.5 673.4 L401.8 675.0 L402.0 676.7 L402.1 678.3 L402.0 680.0" fill="none" stroke="#37362f" stroke-width="30.0"/>
<path d="M277.2 661.4 L277.1 660.3 L277.2 659.2 L277.4 658.1 L277.7 657.0 L278.2 655.9 L278.8 654.8 L279.5 653.7 L280.4 652.7 L281.4 651.7 L282.5 650.7 L283.8 649.7 L285.2 648.7 L286.7 647.8 L288.3 647.0 L290.0 646.1 L291.9 645.3 L293.8 644.5 L295.9 643.8 L298.0 643.2 L300.2 642.5 L302.6 642.0 L305.0 641.4 L307.5 641.0 L310.0 640.6 L312.6 640.2 L315.3 639.9 L318.0 639.7 L320.8 639.5 L323.6 639.4 L326.5 639.3 L329.4 639.4 L332.3 639.4 L335.2 639.6 L338.1 639.8 L341.1 640.0 L344.0 640.4 L346.9 640.8 L349.8 641.2 L352.7 641.8 L355.6 642.4 L358.4 643.0 L361.2 643.7 L363.9 644.5 L366.6 645.3 L369.2 646.2 L371.7 647.2 L374.2 648.2 L376.6 649.2 L379.0 650.3 L381.2 651.5 L383.3 652.7 L385.4 654.0 L387.3 655.3 L389.2 656.6 L390.9 658.0 L392.5 659.4 L394.0 660.9 L395.4 662.3 L396.7 663.9 L397.8 665.4 L398.8 667.0 L399.7 668.5 L400.4 670.1 L401.0 671.8 L401.5 673.4 L401.8 675.0 L402.0 676.7 L402.1 678.3 L402.0 680.0" fill="none" stroke="url(#cg1)" stroke-width="27.4"/>
<path d="M277.2 661.4 L277.1 660.3 L277.2 659.2 L277.4 658.1 L277.7 657.0 L278.2 655.9 L278.8 654.8 L279.5 653.7 L280.4 652.7 L281.4 651.7 L282.5 650.7 L283.8 649.7 L285.2 648.7 L286.7 647.8 L288.3 647.0 L290.0 646.1 L291.9 645.3 L293.8 644.5 L295.9 643.8 L298.0 643.2 L300.2 642.5 L302.6 642.0 L305.0 641.4 L307.5 641.0 L310.0 640.6 L312.6 640.2 L315.3 639.9 L318.0 639.7 L320.8 639.5 L323.6 639.4 L326.5 639.3 L329.4 639.4 L332.3 639.4 L335.2 639.6 L338.1 639.8 L341.1 640.0 L344.0 640.4 L346.9 640.8 L349.8 641.2 L352.7 641.8 L355.6 642.4 L358.4 643.0 L361.2 643.7 L363.9 644.5 L366.6 645.3 L369.2 646.2 L371.7 647.2 L374.2 648.2 L376.6 649.2 L379.0 650.3 L381.2 651.5 L383.3 652.7 L385.4 654.0 L387.3 655.3 L389.2 656.6 L390.9 658.0 L392.5 659.4 L394.0 660.9 L395.4 662.3 L396.7 663.9 L397.8 665.4 L398.8 667.0 L399.7 668.5 L400.4 670.1 L401.0 671.8 L401.5 673.4 L401.8 675.0 L402.0 676.7 L402.1 678.3 L402.0 680.0" fill="none" stroke="#4f4d47" stroke-width="8.7" transform="translate(0 8.7)" opacity=".55"/>
<path d="M277.2 661.4 L277.1 660.3 L277.2 659.2 L277.4 658.1 L277.7 657.0 L278.2 655.9 L278.8 654.8 L279.5 653.7 L280.4 652.7 L281.4 651.7 L282.5 650.7 L283.8 649.7 L285.2 648.7 L286.7 647.8 L288.3 647.0 L290.0 646.1 L291.9 645.3 L293.8 644.5 L295.9 643.8 L298.0 643.2 L300.2 642.5 L302.6 642.0 L305.0 641.4 L307.5 641.0 L310.0 640.6 L312.6 640.2 L315.3 639.9 L318.0 639.7 L320.8 639.5 L323.6 639.4 L326.5 639.3 L329.4 639.4 L332.3 639.4 L335.2 639.6 L338.1 639.8 L341.1 640.0 L344.0 640.4 L346.9 640.8 L349.8 641.2 L352.7 641.8 L355.6 642.4 L358.4 643.0 L361.2 643.7 L363.9 644.5 L366.6 645.3 L369.2 646.2 L371.7 647.2 L374.2 648.2 L376.6 649.2 L379.0 650.3 L381.2 651.5 L383.3 652.7 L385.4 654.0 L387.3 655.3 L389.2 656.6 L390.9 658.0 L392.5 659.4 L394.0 660.9 L395.4 662.3 L396.7 663.9 L397.8 665.4 L398.8 667.0 L399.7 668.5 L400.4 670.1 L401.0 671.8 L401.5 673.4 L401.8 675.0 L402.0 676.7 L402.1 678.3 L402.0 680.0" fill="none" stroke="#b3b0a6" stroke-width="12.2" transform="translate(0 -4.1)" opacity=".6"/>
<path d="M277.2 661.4 L277.1 660.3 L277.2 659.2 L277.4 658.1 L277.7 657.0 L278.2 655.9 L278.8 654.8 L279.5 653.7 L280.4 652.7 L281.4 651.7 L282.5 650.7 L283.8 649.7 L285.2 648.7 L286.7 647.8 L288.3 647.0 L290.0 646.1 L291.9 645.3 L293.8 644.5 L295.9 643.8 L298.0 643.2 L300.2 642.5 L302.6 642.0 L305.0 641.4 L307.5 641.0 L310.0 640.6 L312.6 640.2 L315.3 639.9 L318.0 639.7 L320.8 639.5 L323.6 639.4 L326.5 639.3 L329.4 639.4 L332.3 639.4 L335.2 639.6 L338.1 639.8 L341.1 640.0 L344.0 640.4 L346.9 640.8 L349.8 641.2 L352.7 641.8 L355.6 642.4 L358.4 643.0 L361.2 643.7 L363.9 644.5 L366.6 645.3 L369.2 646.2 L371.7 647.2 L374.2 648.2 L376.6 649.2 L379.0 650.3 L381.2 651.5 L383.3 652.7 L385.4 654.0 L387.3 655.3 L389.2 656.6 L390.9 658.0 L392.5 659.4 L394.0 660.9 L395.4 662.3 L396.7 663.9 L397.8 665.4 L398.8 667.0 L399.7 668.5 L400.4 670.1 L401.0 671.8 L401.5 673.4 L401.8 675.0 L402.0 676.7 L402.1 678.3 L402.0 680.0" fill="none" stroke="url(#cg2)" stroke-width="4.1" transform="translate(0 -5.8)" opacity=".85"/>
<ellipse cx="336.6" cy="656.5" rx="43" ry="10.800" fill="url(#hg)" stroke="#3a3934" stroke-width="1"/>
<path d="M402.0 640.4 L402.1 642.1 L402.0 643.7 L401.8 645.4 L401.5 647.0 L401.0 648.6 L400.4 650.3 L399.7 651.9 L398.8 653.4 L397.8 655.0 L396.7 656.5 L395.4 658.1 L394.0 659.5 L392.5 661.0 L390.9 662.4 L389.2 663.8 L387.3 665.1 L385.4 666.4 L383.3 667.7 L381.2 668.9 L379.0 670.1 L376.6 671.2 L374.2 672.2 L371.7 673.2 L369.2 674.2 L366.6 675.1 L363.9 675.9 L361.2 676.7 L358.4 677.4 L355.6 678.0 L352.7 678.6 L349.8 679.2 L346.9 679.6 L344.0 680.0 L341.1 680.4 L338.1 680.6 L335.2 680.8 L332.3 681.0 L329.4 681.0 L326.5 681.1 L323.6 681.0 L320.8 680.9 L318.0 680.7 L315.3 680.5 L312.6 680.2 L310.0 679.8 L307.5 679.4 L305.0 679.0 L302.6 678.4 L300.2 677.9 L298.0 677.2 L295.9 676.6 L293.8 675.9 L291.9 675.1 L290.0 674.3 L288.3 673.4 L286.7 672.6 L285.2 671.7 L283.8 670.7 L282.5 669.7 L281.4 668.7 L280.4 667.7 L279.5 666.7 L278.8 665.6 L278.2 664.5 L277.7 663.4 L277.4 662.3 L277.2 661.2 L277.1 660.1 L277.2 659.0" fill="none" stroke="#37362f" stroke-width="30.0"/>
<path d="M402.0 640.4 L402.1 642.1 L402.0 643.7 L401.8 645.4 L401.5 647.0 L401.0 648.6 L400.4 650.3 L399.7 651.9 L398.8 653.4 L397.8 655.0 L396.7 656.5 L395.4 658.1 L394.0 659.5 L392.5 661.0 L390.9 662.4 L389.2 663.8 L387.3 665.1 L385.4 666.4 L383.3 667.7 L381.2 668.9 L379.0 670.1 L376.6 671.2 L374.2 672.2 L371.7 673.2 L369.2 674.2 L366.6 675.1 L363.9 675.9 L361.2 676.7 L358.4 677.4 L355.6 678.0 L352.7 678.6 L349.8 679.2 L346.9 679.6 L344.0 680.0 L341.1 680.4 L338.1 680.6 L335.2 680.8 L332.3 681.0 L329.4 681.0 L326.5 681.1 L323.6 681.0 L320.8 680.9 L318.0 680.7 L315.3 680.5 L312.6 680.2 L310.0 679.8 L307.5 679.4 L305.0 679.0 L302.6 678.4 L300.2 677.9 L298.0 677.2 L295.9 676.6 L293.8 675.9 L291.9 675.1 L290.0 674.3 L288.3 673.4 L286.7 672.6 L285.2 671.7 L283.8 670.7 L282.5 669.7 L281.4 668.7 L280.4 667.7 L279.5 666.7 L278.8 665.6 L278.2 664.5 L277.7 663.4 L277.4 662.3 L277.2 661.2 L277.1 660.1 L277.2 659.0" fill="none" stroke="url(#cg1)" stroke-width="27.4"/>
<path d="M402.0 640.4 L402.1 642.1 L402.0 643.7 L401.8 645.4 L401.5 647.0 L401.0 648.6 L400.4 650.3 L399.7 651.9 L398.8 653.4 L397.8 655.0 L396.7 656.5 L395.4 658.1 L394.0 659.5 L392.5 661.0 L390.9 662.4 L389.2 663.8 L387.3 665.1 L385.4 666.4 L383.3 667.7 L381.2 668.9 L379.0 670.1 L376.6 671.2 L374.2 672.2 L371.7 673.2 L369.2 674.2 L366.6 675.1 L363.9 675.9 L361.2 676.7 L358.4 677.4 L355.6 678.0 L352.7 678.6 L349.8 679.2 L346.9 679.6 L344.0 680.0 L341.1 680.4 L338.1 680.6 L335.2 680.8 L332.3 681.0 L329.4 681.0 L326.5 681.1 L323.6 681.0 L320.8 680.9 L318.0 680.7 L315.3 680.5 L312.6 680.2 L310.0 679.8 L307.5 679.4 L305.0 679.0 L302.6 678.4 L300.2 677.9 L298.0 677.2 L295.9 676.6 L293.8 675.9 L291.9 675.1 L290.0 674.3 L288.3 673.4 L286.7 672.6 L285.2 671.7 L283.8 670.7 L282.5 669.7 L281.4 668.7 L280.4 667.7 L279.5 666.7 L278.8 665.6 L278.2 664.5 L277.7 663.4 L277.4 662.3 L277.2 661.2 L277.1 660.1 L277.2 659.0" fill="none" stroke="#4f4d47" stroke-width="8.7" transform="translate(0 8.7)" opacity=".55"/>
<path d="M402.0 640.4 L402.1 642.1 L402.0 643.7 L401.8 645.4 L401.5 647.0 L401.0 648.6 L400.4 650.3 L399.7 651.9 L398.8 653.4 L397.8 655.0 L396.7 656.5 L395.4 658.1 L394.0 659.5 L392.5 661.0 L390.9 662.4 L389.2 663.8 L387.3 665.1 L385.4 666.4 L383.3 667.7 L381.2 668.9 L379.0 670.1 L376.6 671.2 L374.2 672.2 L371.7 673.2 L369.2 674.2 L366.6 675.1 L363.9 675.9 L361.2 676.7 L358.4 677.4 L355.6 678.0 L352.7 678.6 L349.8 679.2 L346.9 679.6 L344.0 680.0 L341.1 680.4 L338.1 680.6 L335.2 680.8 L332.3 681.0 L329.4 681.0 L326.5 681.1 L323.6 681.0 L320.8 680.9 L318.0 680.7 L315.3 680.5 L312.6 680.2 L310.0 679.8 L307.5 679.4 L305.0 679.0 L302.6 678.4 L300.2 677.9 L298.0 677.2 L295.9 676.6 L293.8 675.9 L291.9 675.1 L290.0 674.3 L288.3 673.4 L286.7 672.6 L285.2 671.7 L283.8 670.7 L282.5 669.7 L281.4 668.7 L280.4 667.7 L279.5 666.7 L278.8 665.6 L278.2 664.5 L277.7 663.4 L277.4 662.3 L277.2 661.2 L277.1 660.1 L277.2 659.0" fill="none" stroke="#b3b0a6" stroke-width="12.2" transform="translate(0 -4.1)" opacity=".6"/>
<path d="M402.0 640.4 L402.1 642.1 L402.0 643.7 L401.8 645.4 L401.5 647.0 L401.0 648.6 L400.4 650.3 L399.7 651.9 L398.8 653.4 L397.8 655.0 L396.7 656.5 L395.4 658.1 L394.0 659.5 L392.5 661.0 L390.9 662.4 L389.2 663.8 L387.3 665.1 L385.4 666.4 L383.3 667.7 L381.2 668.9 L379.0 670.1 L376.6 671.2 L374.2 672.2 L371.7 673.2 L369.2 674.2 L366.6 675.1 L363.9 675.9 L361.2 676.7 L358.4 677.4 L355.6 678.0 L352.7 678.6 L349.8 679.2 L346.9 679.6 L344.0 680.0 L341.1 680.4 L338.1 680.6 L335.2 680.8 L332.3 681.0 L329.4 681.0 L326.5 681.1 L323.6 681.0 L320.8 680.9 L318.0 680.7 L315.3 680.5 L312.6 680.2 L310.0 679.8 L307.5 679.4 L305.0 679.0 L302.6 678.4 L300.2 677.9 L298.0 677.2 L295.9 676.6 L293.8 675.9 L291.9 675.1 L290.0 674.3 L288.3 673.4 L286.7 672.6 L285.2 671.7 L283.8 670.7 L282.5 669.7 L281.4 668.7 L280.4 667.7 L279.5 666.7 L278.8 665.6 L278.2 664.5 L277.7 663.4 L277.4 662.3 L277.2 661.2 L277.1 660.1 L277.2 659.0" fill="none" stroke="url(#cg2)" stroke-width="4.1" transform="translate(0 -5.8)" opacity=".85"/>
<path d="M277.2 625.4 L277.1 624.3 L277.2 623.2 L277.4 622.1 L277.7 621.0 L278.2 619.9 L278.8 618.8 L279.5 617.7 L280.4 616.7 L281.4 615.7 L282.5 614.7 L283.8 613.7 L285.2 612.7 L286.7 611.8 L288.3 611.0 L290.0 610.1 L291.9 609.3 L293.8 608.5 L295.9 607.8 L298.0 607.2 L300.2 606.5 L302.6 606.0 L305.0 605.4 L307.5 605.0 L310.0 604.6 L312.6 604.2 L315.3 603.9 L318.0 603.7 L320.8 603.5 L323.6 603.4 L326.5 603.3 L329.4 603.4 L332.3 603.4 L335.2 603.6 L338.1 603.8 L341.1 604.0 L344.0 604.4 L346.9 604.8 L349.8 605.2 L352.7 605.8 L355.6 606.4 L358.4 607.0 L361.2 607.7 L363.9 608.5 L366.6 609.3 L369.2 610.2 L371.7 611.2 L374.2 612.2 L376.6 613.2 L379.0 614.3 L381.2 615.5 L383.3 616.7 L385.4 618.0 L387.3 619.3 L389.2 620.6 L390.9 622.0 L392.5 623.4 L394.0 624.9 L395.4 626.3 L396.7 627.9 L397.8 629.4 L398.8 631.0 L399.7 632.5 L400.4 634.1 L401.0 635.8 L401.5 637.4 L401.8 639.0 L402.0 640.7 L402.1 642.3 L402.0 644.0" fill="none" stroke="#37362f" stroke-width="30.0"/>
<path d="M277.2 625.4 L277.1 624.3 L277.2 623.2 L277.4 622.1 L277.7 621.0 L278.2 619.9 L278.8 618.8 L279.5 617.7 L280.4 616.7 L281.4 615.7 L282.5 614.7 L283.8 613.7 L285.2 612.7 L286.7 611.8 L288.3 611.0 L290.0 610.1 L291.9 609.3 L293.8 608.5 L295.9 607.8 L298.0 607.2 L300.2 606.5 L302.6 606.0 L305.0 605.4 L307.5 605.0 L310.0 604.6 L312.6 604.2 L315.3 603.9 L318.0 603.7 L320.8 603.5 L323.6 603.4 L326.5 603.3 L329.4 603.4 L332.3 603.4 L335.2 603.6 L338.1 603.8 L341.1 604.0 L344.0 604.4 L346.9 604.8 L349.8 605.2 L352.7 605.8 L355.6 606.4 L358.4 607.0 L361.2 607.7 L363.9 608.5 L366.6 609.3 L369.2 610.2 L371.7 611.2 L374.2 612.2 L376.6 613.2 L379.0 614.3 L381.2 615.5 L383.3 616.7 L385.4 618.0 L387.3 619.3 L389.2 620.6 L390.9 622.0 L392.5 623.4 L394.0 624.9 L395.4 626.3 L396.7 627.9 L397.8 629.4 L398.8 631.0 L399.7 632.5 L400.4 634.1 L401.0 635.8 L401.5 637.4 L401.8 639.0 L402.0 640.7 L402.1 642.3 L402.0 644.0" fill="none" stroke="url(#cg1)" stroke-width="27.4"/>
<path d="M277.2 625.4 L277.1 624.3 L277.2 623.2 L277.4 622.1 L277.7 621.0 L278.2 619.9 L278.8 618.8 L279.5 617.7 L280.4 616.7 L281.4 615.7 L282.5 614.7 L283.8 613.7 L285.2 612.7 L286.7 611.8 L288.3 611.0 L290.0 610.1 L291.9 609.3 L293.8 608.5 L295.9 607.8 L298.0 607.2 L300.2 606.5 L302.6 606.0 L305.0 605.4 L307.5 605.0 L310.0 604.6 L312.6 604.2 L315.3 603.9 L318.0 603.7 L320.8 603.5 L323.6 603.4 L326.5 603.3 L329.4 603.4 L332.3 603.4 L335.2 603.6 L338.1 603.8 L341.1 604.0 L344.0 604.4 L346.9 604.8 L349.8 605.2 L352.7 605.8 L355.6 606.4 L358.4 607.0 L361.2 607.7 L363.9 608.5 L366.6 609.3 L369.2 610.2 L371.7 611.2 L374.2 612.2 L376.6 613.2 L379.0 614.3 L381.2 615.5 L383.3 616.7 L385.4 618.0 L387.3 619.3 L389.2 620.6 L390.9 622.0 L392.5 623.4 L394.0 624.9 L395.4 626.3 L396.7 627.9 L397.8 629.4 L398.8 631.0 L399.7 632.5 L400.4 634.1 L401.0 635.8 L401.5 637.4 L401.8 639.0 L402.0 640.7 L402.1 642.3 L402.0 644.0" fill="none" stroke="#4f4d47" stroke-width="8.7" transform="translate(0 8.7)" opacity=".55"/>
<path d="M277.2 625.4 L277.1 624.3 L277.2 623.2 L277.4 622.1 L277.7 621.0 L278.2 619.9 L278.8 618.8 L279.5 617.7 L280.4 616.7 L281.4 615.7 L282.5 614.7 L283.8 613.7 L285.2 612.7 L286.7 611.8 L288.3 611.0 L290.0 610.1 L291.9 609.3 L293.8 608.5 L295.9 607.8 L298.0 607.2 L300.2 606.5 L302.6 606.0 L305.0 605.4 L307.5 605.0 L310.0 604.6 L312.6 604.2 L315.3 603.9 L318.0 603.7 L320.8 603.5 L323.6 603.4 L326.5 603.3 L329.4 603.4 L332.3 603.4 L335.2 603.6 L338.1 603.8 L341.1 604.0 L344.0 604.4 L346.9 604.8 L349.8 605.2 L352.7 605.8 L355.6 606.4 L358.4 607.0 L361.2 607.7 L363.9 608.5 L366.6 609.3 L369.2 610.2 L371.7 611.2 L374.2 612.2 L376.6 613.2 L379.0 614.3 L381.2 615.5 L383.3 616.7 L385.4 618.0 L387.3 619.3 L389.2 620.6 L390.9 622.0 L392.5 623.4 L394.0 624.9 L395.4 626.3 L396.7 627.9 L397.8 629.4 L398.8 631.0 L399.7 632.5 L400.4 634.1 L401.0 635.8 L401.5 637.4 L401.8 639.0 L402.0 640.7 L402.1 642.3 L402.0 644.0" fill="none" stroke="#b3b0a6" stroke-width="12.2" transform="translate(0 -4.1)" opacity=".6"/>
<path d="M277.2 625.4 L277.1 624.3 L277.2 623.2 L277.4 622.1 L277.7 621.0 L278.2 619.9 L278.8 618.8 L279.5 617.7 L280.4 616.7 L281.4 615.7 L282.5 614.7 L283.8 613.7 L285.2 612.7 L286.7 611.8 L288.3 611.0 L290.0 610.1 L291.9 609.3 L293.8 608.5 L295.9 607.8 L298.0 607.2 L300.2 606.5 L302.6 606.0 L305.0 605.4 L307.5 605.0 L310.0 604.6 L312.6 604.2 L315.3 603.9 L318.0 603.7 L320.8 603.5 L323.6 603.4 L326.5 603.3 L329.4 603.4 L332.3 603.4 L335.2 603.6 L338.1 603.8 L341.1 604.0 L344.0 604.4 L346.9 604.8 L349.8 605.2 L352.7 605.8 L355.6 606.4 L358.4 607.0 L361.2 607.7 L363.9 608.5 L366.6 609.3 L369.2 610.2 L371.7 611.2 L374.2 612.2 L376.6 613.2 L379.0 614.3 L381.2 615.5 L383.3 616.7 L385.4 618.0 L387.3 619.3 L389.2 620.6 L390.9 622.0 L392.5 623.4 L394.0 624.9 L395.4 626.3 L396.7 627.9 L397.8 629.4 L398.8 631.0 L399.7 632.5 L400.4 634.1 L401.0 635.8 L401.5 637.4 L401.8 639.0 L402.0 640.7 L402.1 642.3 L402.0 644.0" fill="none" stroke="url(#cg2)" stroke-width="4.1" transform="translate(0 -5.8)" opacity=".85"/>
<ellipse cx="336.6" cy="620.5" rx="43" ry="10.800" fill="url(#hg)" stroke="#3a3934" stroke-width="1"/>
<path d="M389.0 627.9 L387.5 629.0 L386.0 630.0 L384.5 631.0 L382.8 632.0 L381.2 632.9 L379.4 633.8 L377.6 634.7 L375.8 635.6 L373.9 636.4 L371.9 637.2 L370.0 637.9 L367.9 638.6 L365.9 639.3 L363.8 639.9 L361.6 640.6 L359.5 641.1 L357.3 641.7 L355.1 642.2 L352.9 642.6 L350.6 643.0 L348.3 643.4 L346.1 643.7 L343.8 644.1 L341.5 644.3 L339.2 644.5 L336.9 644.7 L334.6 644.9 L332.3 645.0 L330.1 645.0 L327.8 645.1 L325.6 645.0 L323.3 645.0 L321.1 644.9 L319.0 644.8 L316.8 644.6 L314.7 644.4 L312.6 644.2 L310.5 643.9 L308.5 643.6 L306.6 643.3 L304.6 642.9 L302.8 642.5 L300.9 642.0 L299.2 641.6 L297.4 641.1 L295.8 640.5 L294.2 640.0 L292.6 639.4 L291.2 638.8 L289.7 638.2 L288.4 637.5 L287.1 636.8 L285.9 636.1 L284.8 635.4 L283.7 634.6 L282.7 633.9 L281.8 633.1 L281.0 632.3 L280.2 631.5 L279.5 630.7 L278.9 629.9 L278.4 629.0 L278.0 628.2 L277.7 627.3 L277.4 626.5 L277.2 625.6 L277.1 624.8 L277.1 623.9 L277.2 623.0" fill="none" stroke="#37362f" stroke-width="30.0"/>
<path d="M389.0 627.9 L387.5 629.0 L386.0 630.0 L384.5 631.0 L382.8 632.0 L381.2 632.9 L379.4 633.8 L377.6 634.7 L375.8 635.6 L373.9 636.4 L371.9 637.2 L370.0 637.9 L367.9 638.6 L365.9 639.3 L363.8 639.9 L361.6 640.6 L359.5 641.1 L357.3 641.7 L355.1 642.2 L352.9 642.6 L350.6 643.0 L348.3 643.4 L346.1 643.7 L343.8 644.1 L341.5 644.3 L339.2 644.5 L336.9 644.7 L334.6 644.9 L332.3 645.0 L330.1 645.0 L327.8 645.1 L325.6 645.0 L323.3 645.0 L321.1 644.9 L319.0 644.8 L316.8 644.6 L314.7 644.4 L312.6 644.2 L310.5 643.9 L308.5 643.6 L306.6 643.3 L304.6 642.9 L302.8 642.5 L300.9 642.0 L299.2 641.6 L297.4 641.1 L295.8 640.5 L294.2 640.0 L292.6 639.4 L291.2 638.8 L289.7 638.2 L288.4 637.5 L287.1 636.8 L285.9 636.1 L284.8 635.4 L283.7 634.6 L282.7 633.9 L281.8 633.1 L281.0 632.3 L280.2 631.5 L279.5 630.7 L278.9 629.9 L278.4 629.0 L278.0 628.2 L277.7 627.3 L277.4 626.5 L277.2 625.6 L277.1 624.8 L277.1 623.9 L277.2 623.0" fill="none" stroke="url(#cg1)" stroke-width="27.4"/>
<path d="M389.0 627.9 L387.5 629.0 L386.0 630.0 L384.5 631.0 L382.8 632.0 L381.2 632.9 L379.4 633.8 L377.6 634.7 L375.8 635.6 L373.9 636.4 L371.9 637.2 L370.0 637.9 L367.9 638.6 L365.9 639.3 L363.8 639.9 L361.6 640.6 L359.5 641.1 L357.3 641.7 L355.1 642.2 L352.9 642.6 L350.6 643.0 L348.3 643.4 L346.1 643.7 L343.8 644.1 L341.5 644.3 L339.2 644.5 L336.9 644.7 L334.6 644.9 L332.3 645.0 L330.1 645.0 L327.8 645.1 L325.6 645.0 L323.3 645.0 L321.1 644.9 L319.0 644.8 L316.8 644.6 L314.7 644.4 L312.6 644.2 L310.5 643.9 L308.5 643.6 L306.6 643.3 L304.6 642.9 L302.8 642.5 L300.9 642.0 L299.2 641.6 L297.4 641.1 L295.8 640.5 L294.2 640.0 L292.6 639.4 L291.2 638.8 L289.7 638.2 L288.4 637.5 L287.1 636.8 L285.9 636.1 L284.8 635.4 L283.7 634.6 L282.7 633.9 L281.8 633.1 L281.0 632.3 L280.2 631.5 L279.5 630.7 L278.9 629.9 L278.4 629.0 L278.0 628.2 L277.7 627.3 L277.4 626.5 L277.2 625.6 L277.1 624.8 L277.1 623.9 L277.2 623.0" fill="none" stroke="#4f4d47" stroke-width="8.7" transform="translate(0 8.7)" opacity=".55"/>
<path d="M389.0 627.9 L387.5 629.0 L386.0 630.0 L384.5 631.0 L382.8 632.0 L381.2 632.9 L379.4 633.8 L377.6 634.7 L375.8 635.6 L373.9 636.4 L371.9 637.2 L370.0 637.9 L367.9 638.6 L365.9 639.3 L363.8 639.9 L361.6 640.6 L359.5 641.1 L357.3 641.7 L355.1 642.2 L352.9 642.6 L350.6 643.0 L348.3 643.4 L346.1 643.7 L343.8 644.1 L341.5 644.3 L339.2 644.5 L336.9 644.7 L334.6 644.9 L332.3 645.0 L330.1 645.0 L327.8 645.1 L325.6 645.0 L323.3 645.0 L321.1 644.9 L319.0 644.8 L316.8 644.6 L314.7 644.4 L312.6 644.2 L310.5 643.9 L308.5 643.6 L306.6 643.3 L304.6 642.9 L302.8 642.5 L300.9 642.0 L299.2 641.6 L297.4 641.1 L295.8 640.5 L294.2 640.0 L292.6 639.4 L291.2 638.8 L289.7 638.2 L288.4 637.5 L287.1 636.8 L285.9 636.1 L284.8 635.4 L283.7 634.6 L282.7 633.9 L281.8 633.1 L281.0 632.3 L280.2 631.5 L279.5 630.7 L278.9 629.9 L278.4 629.0 L278.0 628.2 L277.7 627.3 L277.4 626.5 L277.2 625.6 L277.1 624.8 L277.1 623.9 L277.2 623.0" fill="none" stroke="#b3b0a6" stroke-width="12.2" transform="translate(0 -4.1)" opacity=".6"/>
<path d="M389.0 627.9 L387.5 629.0 L386.0 630.0 L384.5 631.0 L382.8 632.0 L381.2 632.9 L379.4 633.8 L377.6 634.7 L375.8 635.6 L373.9 636.4 L371.9 637.2 L370.0 637.9 L367.9 638.6 L365.9 639.3 L363.8 639.9 L361.6 640.6 L359.5 641.1 L357.3 641.7 L355.1 642.2 L352.9 642.6 L350.6 643.0 L348.3 643.4 L346.1 643.7 L343.8 644.1 L341.5 644.3 L339.2 644.5 L336.9 644.7 L334.6 644.9 L332.3 645.0 L330.1 645.0 L327.8 645.1 L325.6 645.0 L323.3 645.0 L321.1 644.9 L319.0 644.8 L316.8 644.6 L314.7 644.4 L312.6 644.2 L310.5 643.9 L308.5 643.6 L306.6 643.3 L304.6 642.9 L302.8 642.5 L300.9 642.0 L299.2 641.6 L297.4 641.1 L295.8 640.5 L294.2 640.0 L292.6 639.4 L291.2 638.8 L289.7 638.2 L288.4 637.5 L287.1 636.8 L285.9 636.1 L284.8 635.4 L283.7 634.6 L282.7 633.9 L281.8 633.1 L281.0 632.3 L280.2 631.5 L279.5 630.7 L278.9 629.9 L278.4 629.0 L278.0 628.2 L277.7 627.3 L277.4 626.5 L277.2 625.6 L277.1 624.8 L277.1 623.9 L277.2 623.0" fill="none" stroke="url(#cg2)" stroke-width="4.1" transform="translate(0 -5.8)" opacity=".85"/>
<ellipse cx="339" cy="735" rx="62" ry="52" fill="none" stroke="#8d9bd6" stroke-width="1.1"/>
<path d="M320 576 Q336 566 348 578 T358 592" fill="none" stroke="#ddd" stroke-width="1"/>
<ellipse cx="340.5" cy="575.5" rx="2.2" ry="3" fill="#fff" stroke="#333" stroke-width=".8"/>
<path d="M340 609v-9M336 603.5l4-4.500 4 4.500" fill="none" stroke="#fff" stroke-width="1.700"/>
</svg>
<div id="dlg" class="abs" style="left:824px;top:205px;width:249px;height:391px;background:#f2f2f2;border:1px solid #dcdcdc;box-sizing:border-box;"></div>
<div class="abs" style="left:825px;top:206px;width:247px;height:23px;background:#f6f6f6;border-bottom:1px solid #dedede;"></div>
<div class="abs" style="left:825px;top:560px;width:247px;height:1px;background:#dedede;"></div>
<div class="abs" style="left:825px;top:561px;width:247px;height:34px;background:#f0f0f0;"></div>
<div class="abs" style="left:836px;top:216px;width:9px;height:2px;background:#555"></div>
<div class="t dl" id="dh" style="left:852px;top:211px;color:#3a3a3a;font-size:12px">EDIT FEATURE</div>
<svg class="abs" style="left:1059px;top:213px" width="9" height="8" viewBox="0 0 9 8"><path d="M0 .8l3.800 3.200-3.800 3.200zM4.600 .8l3.800 3.200-3.800 3.200z" fill="#8a8a8a"/></svg>
<div class="abs" style="left:1065px;top:231px;width:5px;height:328px;background:#d9d9d9;"></div>
<div class="t dl" id="dl0" style="left:837px;top:238px">Profile</div>
<div class="t dl" id="dl1" style="left:837px;top:268px">Type</div>
<div class="t dl" id="dl2" style="left:837px;top:298px">Rotation</div>
<div class="t dl" id="dl3" style="left:837px;top:328px">Diameter</div>
<div class="t dl" id="dl4" style="left:837px;top:358px">Revoluti...</div>
<div class="t dl" id="dl5" style="left:837px;top:388px">Pitch</div>
<div class="t dl" id="dl6" style="left:837px;top:418px">Angle</div>
<div class="t dl" id="dl7" style="left:837px;top:448px">Section</div>
<div class="t dl" id="dl8" style="left:837px;top:508px">Section ...</div>
<div class="t dl" id="dl9" style="left:837px;top:538px">Operatic...</div>
<div class="abs" style="left:897px;top:231px;width:24px;height:28px;box-sizing:border-box;background:#d9eaf6;border:1.500px solid #5db2e6;border-radius:2.500px;"></div>
<svg class="abs" style="left:904px;top:236px" width="12" height="18" viewBox="0 0 12 18"><path d="M1.500 1v12.500l3-2.800 2.200 5 2-.9-2.200-4.900h4z" fill="#fff" stroke="#444" stroke-width="1" stroke-linejoin="round"/></svg>
<div class="inp" style="top:262px;border-color:#e6e6e6"></div>
<div class="t dl" id="dv0" style="left:905px;top:268px">Revolution and Pitch</div>
<div class="dda" style="left:1030px;top:273px"></div>
<svg class="abs" style="left:900px;top:296px" width="18" height="18" viewBox="0 0 18 18"><path d="M4.300 12.800A6 6 0 0 1 9 3.200" fill="none" stroke="#333" stroke-width="1.300"/><path d="M8.600 .800L12.200 3.200L8.600 5.600z" fill="#333"/><path d="M2.300 11.300L5.900 12.300L3.300 15.200z" fill="#333"/><path d="M13 4.500A6 6 0 0 1 8.200 14.900" fill="none" stroke="#2b8de0" stroke-width="1.400"/><path d="M11.300 3.300L14.500 4L12.500 6.500z" fill="#2b8de0"/></svg>
<div class="inp" style="top:322px"></div>
<div class="t dl" id="di0" style="left:901px;top:328px">81 mm</div>
<div class="inp" style="top:352px"></div>
<div class="t dl" id="di1" style="left:901px;top:358px">1 / 8</div>
<div class="inp" style="top:382px"></div>
<div class="t dl" id="di2" style="left:901px;top:388px">25 mm</div>
<div class="inp" style="top:412px"></div>
<div class="t dl" id="di3" style="left:901px;top:418px">0.0 deg</div>
<div class="inp" style="top:442px;border-color:#e6e6e6"></div>
<div class="abs" style="left:902px;top:447px;width:1px;height:15px;background:#333"></div>
<svg class="abs" style="left:904px;top:448px" width="12" height="14" viewBox="0 0 12 14"><path d="M11 1v12l-10.500-6z" fill="#4a98dc"/></svg>
<div class="t dl" id="dv1" style="left:921px;top:448px">Triangular (Interı...</div>
<div class="dda" style="left:1030px;top:453px"></div>
<div class="inp" style="top:472px;border-color:#e6e6e6"></div>
<div class="t dl" id="dv2" style="left:939px;top:478px">Center</div>
<div class="dda" style="left:1030px;top:483px"></div>
<div class="inp" style="top:502px"></div>
<div class="t dl" id="di4" style="left:901px;top:508px">3 mm</div>
<div class="inp" style="top:532px;border-color:#e6e6e6"></div>
<svg class="abs" style="left:901px;top:536px" width="18" height="18" viewBox="0 0 18 18"><path d="M1 4v9a6 2.600 0 0 0 12 0v-9z" fill="#4a98dc"/><ellipse cx="7" cy="4" rx="6" ry="2.600" fill="#8cc6f2"/><rect x="8.500" y="8.500" width="9.500" height="9.500" fill="#fff"/><path d="M13.300 9.500v8M9.300 13.500h8" stroke="#22a843" stroke-width="2.200"/></svg>
<div class="t dl" id="dv3" style="left:921px;top:538px">New Body</div>
<div class="dda" style="left:1030px;top:543px"></div>
<svg class="abs" style="left:831px;top:571px" width="16" height="16" viewBox="0 0 16 16"><circle cx="8" cy="8" r="7" fill="#8c8c8c"/><rect x="7" y="6.800" width="2" height="5.200" fill="#fff"/><circle cx="8" cy="4.600" r="1.200" fill="#fff"/></svg>
<div class="btn" style="left:940px;width:43px"></div><div class="t dl" id="db0" style="left:953px;top:572px;font-size:12px">OK</div>
<div class="btn" style="left:997px;width:63px"></div><div class="t dl" id="db1" style="left:1010px;top:572px;font-size:12px">Cancel</div>
<div class="abs" style="left:790px;top:474px;width:14px;height:22px;background:repeating-linear-gradient(180deg,#e3e3e3 0 1px,#f4f4f4 1px 2px);border:1px solid #e8e8e8;box-sizing:border-box"></div>
<div class="abs" style="left:803px;top:474px;width:119px;height:22px;background:#fff;border:1px solid #d9d9d9;box-sizing:border-box"></div>
<div class="abs" style="left:921px;top:474px;width:25px;height:22px;background:#efefef;"></div>
<div class="abs" style="left:933px;top:478px;width:2px;height:2px;background:#777"></div>
<div class="abs" style="left:933px;top:483px;width:2px;height:2px;background:#777"></div>
<div class="abs" style="left:933px;top:488px;width:2px;height:2px;background:#777"></div>
<div class="t dl" id="df" style="left:844px;top:478px">81 mm</div>
<div class="t dl" id="sa" style="left:1000px;top:604px;font-weight:bold;color:#333;font-size:12px">Sketch Arc</div>
</body>
</html>
